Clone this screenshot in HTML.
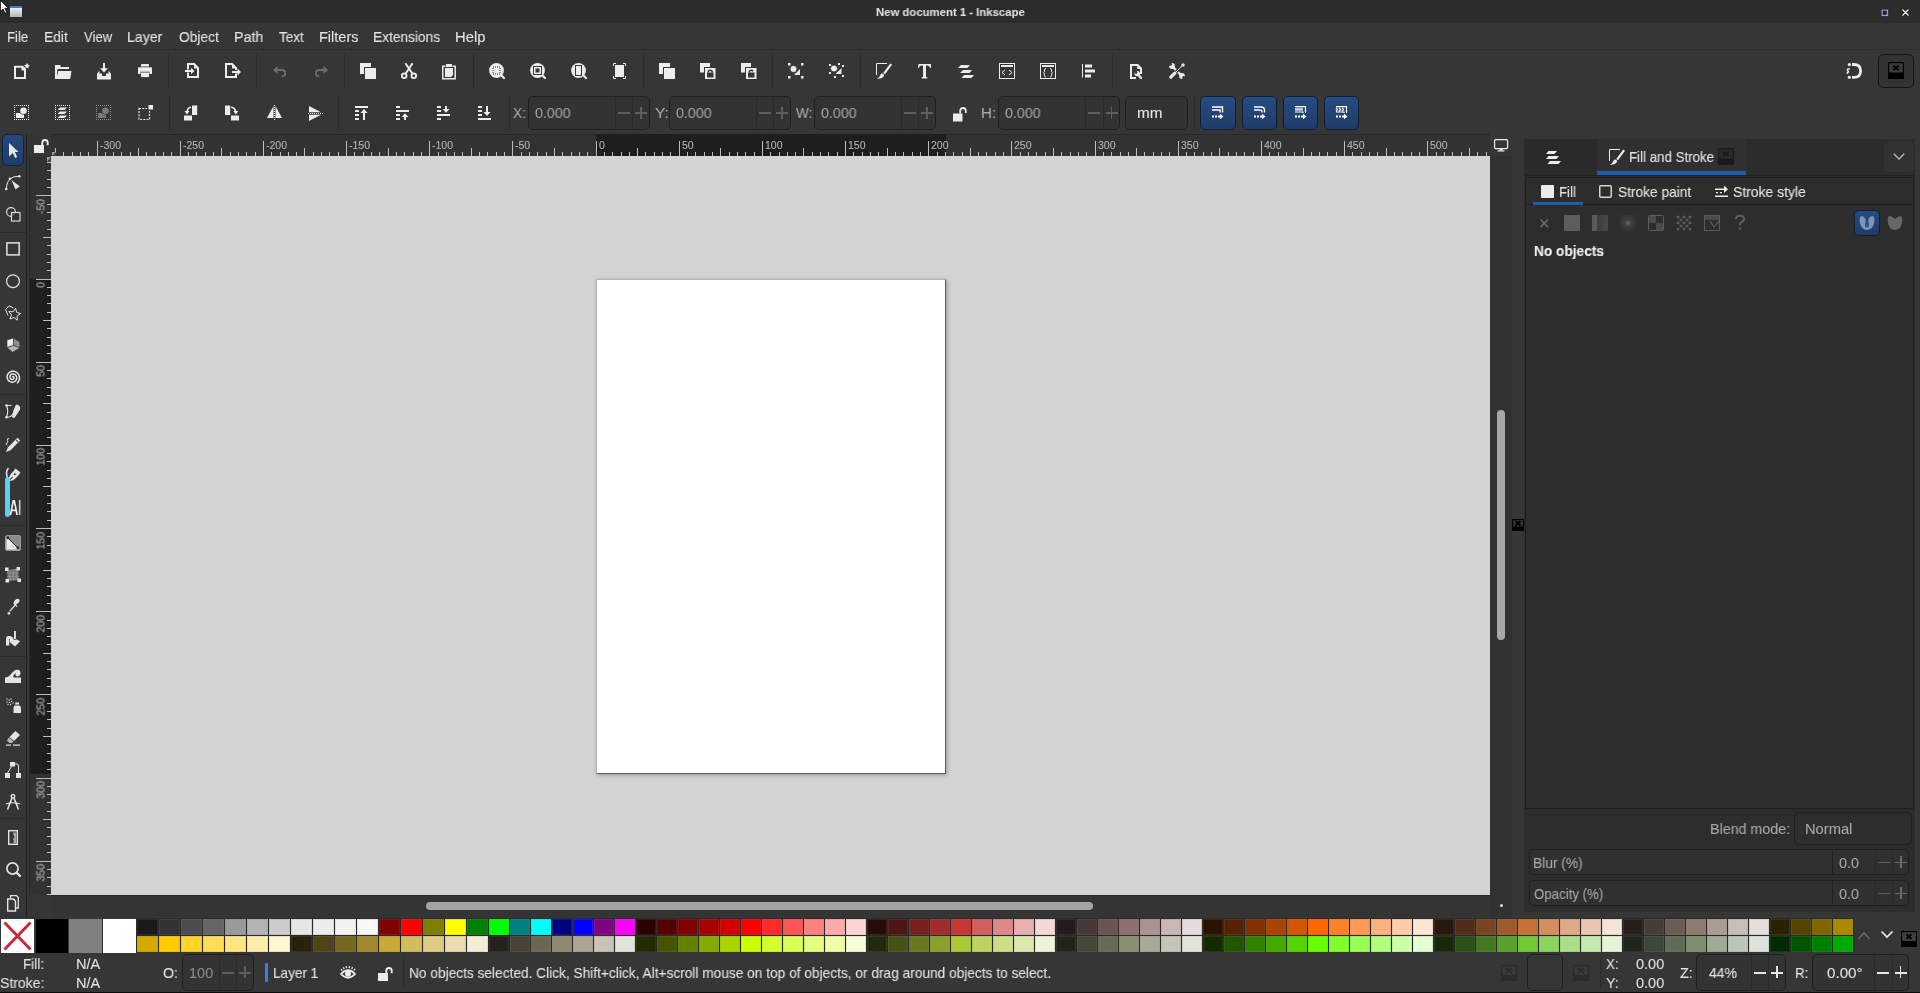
<!DOCTYPE html><html><head><meta charset="utf-8"><style>
*{margin:0;padding:0;box-sizing:border-box}
html,body{width:1920px;height:993px;overflow:hidden;background:#363636;font-family:"Liberation Sans",sans-serif;position:relative}
div,span,svg{position:absolute;display:block}
.t{white-space:nowrap;line-height:1;transform-origin:0 0;will-change:transform;-webkit-text-stroke:0.1px currentColor}
svg{overflow:visible}
</style></head><body><div style="left:0px;top:0px;width:1920px;height:23px;background:#2c2c2c"></div><div style="left:0px;top:23px;width:1920px;height:26px;background:#363636"></div><div style="left:0px;top:49px;width:1920px;height:1px;background:#2f2f2f"></div><div style="left:0px;top:50px;width:1920px;height:84px;background:#363636"></div><div style="left:0px;top:134px;width:27px;height:783px;background:#363636"></div><div style="left:26px;top:134px;width:1px;height:783px;background:#222222"></div><div style="left:27px;top:134px;width:24px;height:22px;background:#353535"></div><div style="left:51px;top:134px;width:1439px;height:22px;background:#323232"></div><div style="left:51px;top:134px;width:1439px;height:1px;background:#282828"></div><div style="left:27px;top:156px;width:24px;height:739px;background:#323232"></div><div style="left:27px;top:156px;width:2px;height:739px;background:#353535"></div><div style="left:29px;top:156px;width:1px;height:739px;background:#2a2a2a"></div><div style="left:51px;top:156px;width:1439px;height:739px;background:#d3d3d3"></div><div style="left:1490px;top:134px;width:22px;height:783px;background:#313131"></div><div style="left:1490px;top:134px;width:22px;height:22px;background:#363636"></div><div style="left:51px;top:895px;width:1439px;height:22px;background:#343434"></div><div style="left:51px;top:895px;width:1439px;height:1px;background:#262626"></div><div style="left:0px;top:917px;width:1920px;height:76px;background:#363636"></div><div style="left:596px;top:134px;width:350px;height:22px;background:#1e1e1e"></div><div style="left:30px;top:279px;width:21px;height:495px;background:#1e1e1e"></div><svg style="left:0;top:0" width="1920" height="993"><line x1="55.5" y1="148" x2="55.5" y2="156" stroke="#bdbdbd" stroke-width="1"/><line x1="63.5" y1="152" x2="63.5" y2="156" stroke="#bdbdbd" stroke-width="1"/><line x1="72.5" y1="152" x2="72.5" y2="156" stroke="#bdbdbd" stroke-width="1"/><line x1="80.5" y1="152" x2="80.5" y2="156" stroke="#bdbdbd" stroke-width="1"/><line x1="88.5" y1="152" x2="88.5" y2="156" stroke="#bdbdbd" stroke-width="1"/><line x1="97.5" y1="141" x2="97.5" y2="156" stroke="#bdbdbd" stroke-width="1"/><line x1="105.5" y1="152" x2="105.5" y2="156" stroke="#bdbdbd" stroke-width="1"/><line x1="113.5" y1="152" x2="113.5" y2="156" stroke="#bdbdbd" stroke-width="1"/><line x1="121.5" y1="152" x2="121.5" y2="156" stroke="#bdbdbd" stroke-width="1"/><line x1="130.5" y1="152" x2="130.5" y2="156" stroke="#bdbdbd" stroke-width="1"/><line x1="138.5" y1="148" x2="138.5" y2="156" stroke="#bdbdbd" stroke-width="1"/><line x1="146.5" y1="152" x2="146.5" y2="156" stroke="#bdbdbd" stroke-width="1"/><line x1="155.5" y1="152" x2="155.5" y2="156" stroke="#bdbdbd" stroke-width="1"/><line x1="163.5" y1="152" x2="163.5" y2="156" stroke="#bdbdbd" stroke-width="1"/><line x1="171.5" y1="152" x2="171.5" y2="156" stroke="#bdbdbd" stroke-width="1"/><line x1="180.5" y1="141" x2="180.5" y2="156" stroke="#bdbdbd" stroke-width="1"/><line x1="188.5" y1="152" x2="188.5" y2="156" stroke="#bdbdbd" stroke-width="1"/><line x1="196.5" y1="152" x2="196.5" y2="156" stroke="#bdbdbd" stroke-width="1"/><line x1="205.5" y1="152" x2="205.5" y2="156" stroke="#bdbdbd" stroke-width="1"/><line x1="213.5" y1="152" x2="213.5" y2="156" stroke="#bdbdbd" stroke-width="1"/><line x1="221.5" y1="148" x2="221.5" y2="156" stroke="#bdbdbd" stroke-width="1"/><line x1="230.5" y1="152" x2="230.5" y2="156" stroke="#bdbdbd" stroke-width="1"/><line x1="238.5" y1="152" x2="238.5" y2="156" stroke="#bdbdbd" stroke-width="1"/><line x1="246.5" y1="152" x2="246.5" y2="156" stroke="#bdbdbd" stroke-width="1"/><line x1="255.5" y1="152" x2="255.5" y2="156" stroke="#bdbdbd" stroke-width="1"/><line x1="263.5" y1="141" x2="263.5" y2="156" stroke="#bdbdbd" stroke-width="1"/><line x1="271.5" y1="152" x2="271.5" y2="156" stroke="#bdbdbd" stroke-width="1"/><line x1="280.5" y1="152" x2="280.5" y2="156" stroke="#bdbdbd" stroke-width="1"/><line x1="288.5" y1="152" x2="288.5" y2="156" stroke="#bdbdbd" stroke-width="1"/><line x1="296.5" y1="152" x2="296.5" y2="156" stroke="#bdbdbd" stroke-width="1"/><line x1="304.5" y1="148" x2="304.5" y2="156" stroke="#bdbdbd" stroke-width="1"/><line x1="313.5" y1="152" x2="313.5" y2="156" stroke="#bdbdbd" stroke-width="1"/><line x1="321.5" y1="152" x2="321.5" y2="156" stroke="#bdbdbd" stroke-width="1"/><line x1="329.5" y1="152" x2="329.5" y2="156" stroke="#bdbdbd" stroke-width="1"/><line x1="338.5" y1="152" x2="338.5" y2="156" stroke="#bdbdbd" stroke-width="1"/><line x1="346.5" y1="141" x2="346.5" y2="156" stroke="#bdbdbd" stroke-width="1"/><line x1="354.5" y1="152" x2="354.5" y2="156" stroke="#bdbdbd" stroke-width="1"/><line x1="363.5" y1="152" x2="363.5" y2="156" stroke="#bdbdbd" stroke-width="1"/><line x1="371.5" y1="152" x2="371.5" y2="156" stroke="#bdbdbd" stroke-width="1"/><line x1="379.5" y1="152" x2="379.5" y2="156" stroke="#bdbdbd" stroke-width="1"/><line x1="388.5" y1="148" x2="388.5" y2="156" stroke="#bdbdbd" stroke-width="1"/><line x1="396.5" y1="152" x2="396.5" y2="156" stroke="#bdbdbd" stroke-width="1"/><line x1="404.5" y1="152" x2="404.5" y2="156" stroke="#bdbdbd" stroke-width="1"/><line x1="413.5" y1="152" x2="413.5" y2="156" stroke="#bdbdbd" stroke-width="1"/><line x1="421.5" y1="152" x2="421.5" y2="156" stroke="#bdbdbd" stroke-width="1"/><line x1="429.5" y1="141" x2="429.5" y2="156" stroke="#bdbdbd" stroke-width="1"/><line x1="438.5" y1="152" x2="438.5" y2="156" stroke="#bdbdbd" stroke-width="1"/><line x1="446.5" y1="152" x2="446.5" y2="156" stroke="#bdbdbd" stroke-width="1"/><line x1="454.5" y1="152" x2="454.5" y2="156" stroke="#bdbdbd" stroke-width="1"/><line x1="462.5" y1="152" x2="462.5" y2="156" stroke="#bdbdbd" stroke-width="1"/><line x1="471.5" y1="148" x2="471.5" y2="156" stroke="#bdbdbd" stroke-width="1"/><line x1="479.5" y1="152" x2="479.5" y2="156" stroke="#bdbdbd" stroke-width="1"/><line x1="487.5" y1="152" x2="487.5" y2="156" stroke="#bdbdbd" stroke-width="1"/><line x1="496.5" y1="152" x2="496.5" y2="156" stroke="#bdbdbd" stroke-width="1"/><line x1="504.5" y1="152" x2="504.5" y2="156" stroke="#bdbdbd" stroke-width="1"/><line x1="512.5" y1="141" x2="512.5" y2="156" stroke="#bdbdbd" stroke-width="1"/><line x1="521.5" y1="152" x2="521.5" y2="156" stroke="#bdbdbd" stroke-width="1"/><line x1="529.5" y1="152" x2="529.5" y2="156" stroke="#bdbdbd" stroke-width="1"/><line x1="537.5" y1="152" x2="537.5" y2="156" stroke="#bdbdbd" stroke-width="1"/><line x1="546.5" y1="152" x2="546.5" y2="156" stroke="#bdbdbd" stroke-width="1"/><line x1="554.5" y1="148" x2="554.5" y2="156" stroke="#bdbdbd" stroke-width="1"/><line x1="562.5" y1="152" x2="562.5" y2="156" stroke="#bdbdbd" stroke-width="1"/><line x1="571.5" y1="152" x2="571.5" y2="156" stroke="#bdbdbd" stroke-width="1"/><line x1="579.5" y1="152" x2="579.5" y2="156" stroke="#bdbdbd" stroke-width="1"/><line x1="587.5" y1="152" x2="587.5" y2="156" stroke="#bdbdbd" stroke-width="1"/><line x1="596.5" y1="141" x2="596.5" y2="156" stroke="#bdbdbd" stroke-width="1"/><line x1="604.5" y1="152" x2="604.5" y2="156" stroke="#bdbdbd" stroke-width="1"/><line x1="612.5" y1="152" x2="612.5" y2="156" stroke="#bdbdbd" stroke-width="1"/><line x1="621.5" y1="152" x2="621.5" y2="156" stroke="#bdbdbd" stroke-width="1"/><line x1="629.5" y1="152" x2="629.5" y2="156" stroke="#bdbdbd" stroke-width="1"/><line x1="637.5" y1="148" x2="637.5" y2="156" stroke="#bdbdbd" stroke-width="1"/><line x1="645.5" y1="152" x2="645.5" y2="156" stroke="#bdbdbd" stroke-width="1"/><line x1="654.5" y1="152" x2="654.5" y2="156" stroke="#bdbdbd" stroke-width="1"/><line x1="662.5" y1="152" x2="662.5" y2="156" stroke="#bdbdbd" stroke-width="1"/><line x1="670.5" y1="152" x2="670.5" y2="156" stroke="#bdbdbd" stroke-width="1"/><line x1="679.5" y1="141" x2="679.5" y2="156" stroke="#bdbdbd" stroke-width="1"/><line x1="687.5" y1="152" x2="687.5" y2="156" stroke="#bdbdbd" stroke-width="1"/><line x1="695.5" y1="152" x2="695.5" y2="156" stroke="#bdbdbd" stroke-width="1"/><line x1="704.5" y1="152" x2="704.5" y2="156" stroke="#bdbdbd" stroke-width="1"/><line x1="712.5" y1="152" x2="712.5" y2="156" stroke="#bdbdbd" stroke-width="1"/><line x1="720.5" y1="148" x2="720.5" y2="156" stroke="#bdbdbd" stroke-width="1"/><line x1="729.5" y1="152" x2="729.5" y2="156" stroke="#bdbdbd" stroke-width="1"/><line x1="737.5" y1="152" x2="737.5" y2="156" stroke="#bdbdbd" stroke-width="1"/><line x1="745.5" y1="152" x2="745.5" y2="156" stroke="#bdbdbd" stroke-width="1"/><line x1="754.5" y1="152" x2="754.5" y2="156" stroke="#bdbdbd" stroke-width="1"/><line x1="762.5" y1="141" x2="762.5" y2="156" stroke="#bdbdbd" stroke-width="1"/><line x1="770.5" y1="152" x2="770.5" y2="156" stroke="#bdbdbd" stroke-width="1"/><line x1="779.5" y1="152" x2="779.5" y2="156" stroke="#bdbdbd" stroke-width="1"/><line x1="787.5" y1="152" x2="787.5" y2="156" stroke="#bdbdbd" stroke-width="1"/><line x1="795.5" y1="152" x2="795.5" y2="156" stroke="#bdbdbd" stroke-width="1"/><line x1="803.5" y1="148" x2="803.5" y2="156" stroke="#bdbdbd" stroke-width="1"/><line x1="812.5" y1="152" x2="812.5" y2="156" stroke="#bdbdbd" stroke-width="1"/><line x1="820.5" y1="152" x2="820.5" y2="156" stroke="#bdbdbd" stroke-width="1"/><line x1="828.5" y1="152" x2="828.5" y2="156" stroke="#bdbdbd" stroke-width="1"/><line x1="837.5" y1="152" x2="837.5" y2="156" stroke="#bdbdbd" stroke-width="1"/><line x1="845.5" y1="141" x2="845.5" y2="156" stroke="#bdbdbd" stroke-width="1"/><line x1="853.5" y1="152" x2="853.5" y2="156" stroke="#bdbdbd" stroke-width="1"/><line x1="862.5" y1="152" x2="862.5" y2="156" stroke="#bdbdbd" stroke-width="1"/><line x1="870.5" y1="152" x2="870.5" y2="156" stroke="#bdbdbd" stroke-width="1"/><line x1="878.5" y1="152" x2="878.5" y2="156" stroke="#bdbdbd" stroke-width="1"/><line x1="887.5" y1="148" x2="887.5" y2="156" stroke="#bdbdbd" stroke-width="1"/><line x1="895.5" y1="152" x2="895.5" y2="156" stroke="#bdbdbd" stroke-width="1"/><line x1="903.5" y1="152" x2="903.5" y2="156" stroke="#bdbdbd" stroke-width="1"/><line x1="912.5" y1="152" x2="912.5" y2="156" stroke="#bdbdbd" stroke-width="1"/><line x1="920.5" y1="152" x2="920.5" y2="156" stroke="#bdbdbd" stroke-width="1"/><line x1="928.5" y1="141" x2="928.5" y2="156" stroke="#bdbdbd" stroke-width="1"/><line x1="937.5" y1="152" x2="937.5" y2="156" stroke="#bdbdbd" stroke-width="1"/><line x1="945.5" y1="152" x2="945.5" y2="156" stroke="#bdbdbd" stroke-width="1"/><line x1="953.5" y1="152" x2="953.5" y2="156" stroke="#bdbdbd" stroke-width="1"/><line x1="962.5" y1="152" x2="962.5" y2="156" stroke="#bdbdbd" stroke-width="1"/><line x1="970.5" y1="148" x2="970.5" y2="156" stroke="#bdbdbd" stroke-width="1"/><line x1="978.5" y1="152" x2="978.5" y2="156" stroke="#bdbdbd" stroke-width="1"/><line x1="986.5" y1="152" x2="986.5" y2="156" stroke="#bdbdbd" stroke-width="1"/><line x1="995.5" y1="152" x2="995.5" y2="156" stroke="#bdbdbd" stroke-width="1"/><line x1="1003.5" y1="152" x2="1003.5" y2="156" stroke="#bdbdbd" stroke-width="1"/><line x1="1011.5" y1="141" x2="1011.5" y2="156" stroke="#bdbdbd" stroke-width="1"/><line x1="1020.5" y1="152" x2="1020.5" y2="156" stroke="#bdbdbd" stroke-width="1"/><line x1="1028.5" y1="152" x2="1028.5" y2="156" stroke="#bdbdbd" stroke-width="1"/><line x1="1036.5" y1="152" x2="1036.5" y2="156" stroke="#bdbdbd" stroke-width="1"/><line x1="1045.5" y1="152" x2="1045.5" y2="156" stroke="#bdbdbd" stroke-width="1"/><line x1="1053.5" y1="148" x2="1053.5" y2="156" stroke="#bdbdbd" stroke-width="1"/><line x1="1061.5" y1="152" x2="1061.5" y2="156" stroke="#bdbdbd" stroke-width="1"/><line x1="1070.5" y1="152" x2="1070.5" y2="156" stroke="#bdbdbd" stroke-width="1"/><line x1="1078.5" y1="152" x2="1078.5" y2="156" stroke="#bdbdbd" stroke-width="1"/><line x1="1086.5" y1="152" x2="1086.5" y2="156" stroke="#bdbdbd" stroke-width="1"/><line x1="1095.5" y1="141" x2="1095.5" y2="156" stroke="#bdbdbd" stroke-width="1"/><line x1="1103.5" y1="152" x2="1103.5" y2="156" stroke="#bdbdbd" stroke-width="1"/><line x1="1111.5" y1="152" x2="1111.5" y2="156" stroke="#bdbdbd" stroke-width="1"/><line x1="1120.5" y1="152" x2="1120.5" y2="156" stroke="#bdbdbd" stroke-width="1"/><line x1="1128.5" y1="152" x2="1128.5" y2="156" stroke="#bdbdbd" stroke-width="1"/><line x1="1136.5" y1="148" x2="1136.5" y2="156" stroke="#bdbdbd" stroke-width="1"/><line x1="1144.5" y1="152" x2="1144.5" y2="156" stroke="#bdbdbd" stroke-width="1"/><line x1="1153.5" y1="152" x2="1153.5" y2="156" stroke="#bdbdbd" stroke-width="1"/><line x1="1161.5" y1="152" x2="1161.5" y2="156" stroke="#bdbdbd" stroke-width="1"/><line x1="1169.5" y1="152" x2="1169.5" y2="156" stroke="#bdbdbd" stroke-width="1"/><line x1="1178.5" y1="141" x2="1178.5" y2="156" stroke="#bdbdbd" stroke-width="1"/><line x1="1186.5" y1="152" x2="1186.5" y2="156" stroke="#bdbdbd" stroke-width="1"/><line x1="1194.5" y1="152" x2="1194.5" y2="156" stroke="#bdbdbd" stroke-width="1"/><line x1="1203.5" y1="152" x2="1203.5" y2="156" stroke="#bdbdbd" stroke-width="1"/><line x1="1211.5" y1="152" x2="1211.5" y2="156" stroke="#bdbdbd" stroke-width="1"/><line x1="1219.5" y1="148" x2="1219.5" y2="156" stroke="#bdbdbd" stroke-width="1"/><line x1="1228.5" y1="152" x2="1228.5" y2="156" stroke="#bdbdbd" stroke-width="1"/><line x1="1236.5" y1="152" x2="1236.5" y2="156" stroke="#bdbdbd" stroke-width="1"/><line x1="1244.5" y1="152" x2="1244.5" y2="156" stroke="#bdbdbd" stroke-width="1"/><line x1="1253.5" y1="152" x2="1253.5" y2="156" stroke="#bdbdbd" stroke-width="1"/><line x1="1261.5" y1="141" x2="1261.5" y2="156" stroke="#bdbdbd" stroke-width="1"/><line x1="1269.5" y1="152" x2="1269.5" y2="156" stroke="#bdbdbd" stroke-width="1"/><line x1="1278.5" y1="152" x2="1278.5" y2="156" stroke="#bdbdbd" stroke-width="1"/><line x1="1286.5" y1="152" x2="1286.5" y2="156" stroke="#bdbdbd" stroke-width="1"/><line x1="1294.5" y1="152" x2="1294.5" y2="156" stroke="#bdbdbd" stroke-width="1"/><line x1="1303.5" y1="148" x2="1303.5" y2="156" stroke="#bdbdbd" stroke-width="1"/><line x1="1311.5" y1="152" x2="1311.5" y2="156" stroke="#bdbdbd" stroke-width="1"/><line x1="1319.5" y1="152" x2="1319.5" y2="156" stroke="#bdbdbd" stroke-width="1"/><line x1="1327.5" y1="152" x2="1327.5" y2="156" stroke="#bdbdbd" stroke-width="1"/><line x1="1336.5" y1="152" x2="1336.5" y2="156" stroke="#bdbdbd" stroke-width="1"/><line x1="1344.5" y1="141" x2="1344.5" y2="156" stroke="#bdbdbd" stroke-width="1"/><line x1="1352.5" y1="152" x2="1352.5" y2="156" stroke="#bdbdbd" stroke-width="1"/><line x1="1361.5" y1="152" x2="1361.5" y2="156" stroke="#bdbdbd" stroke-width="1"/><line x1="1369.5" y1="152" x2="1369.5" y2="156" stroke="#bdbdbd" stroke-width="1"/><line x1="1377.5" y1="152" x2="1377.5" y2="156" stroke="#bdbdbd" stroke-width="1"/><line x1="1386.5" y1="148" x2="1386.5" y2="156" stroke="#bdbdbd" stroke-width="1"/><line x1="1394.5" y1="152" x2="1394.5" y2="156" stroke="#bdbdbd" stroke-width="1"/><line x1="1402.5" y1="152" x2="1402.5" y2="156" stroke="#bdbdbd" stroke-width="1"/><line x1="1411.5" y1="152" x2="1411.5" y2="156" stroke="#bdbdbd" stroke-width="1"/><line x1="1419.5" y1="152" x2="1419.5" y2="156" stroke="#bdbdbd" stroke-width="1"/><line x1="1427.5" y1="141" x2="1427.5" y2="156" stroke="#bdbdbd" stroke-width="1"/><line x1="1436.5" y1="152" x2="1436.5" y2="156" stroke="#bdbdbd" stroke-width="1"/><line x1="1444.5" y1="152" x2="1444.5" y2="156" stroke="#bdbdbd" stroke-width="1"/><line x1="1452.5" y1="152" x2="1452.5" y2="156" stroke="#bdbdbd" stroke-width="1"/><line x1="1461.5" y1="152" x2="1461.5" y2="156" stroke="#bdbdbd" stroke-width="1"/><line x1="1469.5" y1="148" x2="1469.5" y2="156" stroke="#bdbdbd" stroke-width="1"/><line x1="1477.5" y1="152" x2="1477.5" y2="156" stroke="#bdbdbd" stroke-width="1"/><line x1="1486.5" y1="152" x2="1486.5" y2="156" stroke="#bdbdbd" stroke-width="1"/><line x1="47" y1="162.5" x2="51" y2="162.5" stroke="#bdbdbd" stroke-width="1"/><line x1="47" y1="170.5" x2="51" y2="170.5" stroke="#bdbdbd" stroke-width="1"/><line x1="47" y1="179.5" x2="51" y2="179.5" stroke="#bdbdbd" stroke-width="1"/><line x1="47" y1="187.5" x2="51" y2="187.5" stroke="#bdbdbd" stroke-width="1"/><line x1="36" y1="195.5" x2="51" y2="195.5" stroke="#bdbdbd" stroke-width="1"/><line x1="47" y1="204.5" x2="51" y2="204.5" stroke="#bdbdbd" stroke-width="1"/><line x1="47" y1="212.5" x2="51" y2="212.5" stroke="#bdbdbd" stroke-width="1"/><line x1="47" y1="220.5" x2="51" y2="220.5" stroke="#bdbdbd" stroke-width="1"/><line x1="47" y1="229.5" x2="51" y2="229.5" stroke="#bdbdbd" stroke-width="1"/><line x1="43" y1="237.5" x2="51" y2="237.5" stroke="#bdbdbd" stroke-width="1"/><line x1="47" y1="245.5" x2="51" y2="245.5" stroke="#bdbdbd" stroke-width="1"/><line x1="47" y1="254.5" x2="51" y2="254.5" stroke="#bdbdbd" stroke-width="1"/><line x1="47" y1="262.5" x2="51" y2="262.5" stroke="#bdbdbd" stroke-width="1"/><line x1="47" y1="270.5" x2="51" y2="270.5" stroke="#bdbdbd" stroke-width="1"/><line x1="36" y1="279.5" x2="51" y2="279.5" stroke="#bdbdbd" stroke-width="1"/><line x1="47" y1="287.5" x2="51" y2="287.5" stroke="#bdbdbd" stroke-width="1"/><line x1="47" y1="295.5" x2="51" y2="295.5" stroke="#bdbdbd" stroke-width="1"/><line x1="47" y1="303.5" x2="51" y2="303.5" stroke="#bdbdbd" stroke-width="1"/><line x1="47" y1="312.5" x2="51" y2="312.5" stroke="#bdbdbd" stroke-width="1"/><line x1="43" y1="320.5" x2="51" y2="320.5" stroke="#bdbdbd" stroke-width="1"/><line x1="47" y1="328.5" x2="51" y2="328.5" stroke="#bdbdbd" stroke-width="1"/><line x1="47" y1="337.5" x2="51" y2="337.5" stroke="#bdbdbd" stroke-width="1"/><line x1="47" y1="345.5" x2="51" y2="345.5" stroke="#bdbdbd" stroke-width="1"/><line x1="47" y1="353.5" x2="51" y2="353.5" stroke="#bdbdbd" stroke-width="1"/><line x1="36" y1="362.5" x2="51" y2="362.5" stroke="#bdbdbd" stroke-width="1"/><line x1="47" y1="370.5" x2="51" y2="370.5" stroke="#bdbdbd" stroke-width="1"/><line x1="47" y1="378.5" x2="51" y2="378.5" stroke="#bdbdbd" stroke-width="1"/><line x1="47" y1="387.5" x2="51" y2="387.5" stroke="#bdbdbd" stroke-width="1"/><line x1="47" y1="395.5" x2="51" y2="395.5" stroke="#bdbdbd" stroke-width="1"/><line x1="43" y1="403.5" x2="51" y2="403.5" stroke="#bdbdbd" stroke-width="1"/><line x1="47" y1="412.5" x2="51" y2="412.5" stroke="#bdbdbd" stroke-width="1"/><line x1="47" y1="420.5" x2="51" y2="420.5" stroke="#bdbdbd" stroke-width="1"/><line x1="47" y1="428.5" x2="51" y2="428.5" stroke="#bdbdbd" stroke-width="1"/><line x1="47" y1="437.5" x2="51" y2="437.5" stroke="#bdbdbd" stroke-width="1"/><line x1="36" y1="445.5" x2="51" y2="445.5" stroke="#bdbdbd" stroke-width="1"/><line x1="47" y1="453.5" x2="51" y2="453.5" stroke="#bdbdbd" stroke-width="1"/><line x1="47" y1="461.5" x2="51" y2="461.5" stroke="#bdbdbd" stroke-width="1"/><line x1="47" y1="470.5" x2="51" y2="470.5" stroke="#bdbdbd" stroke-width="1"/><line x1="47" y1="478.5" x2="51" y2="478.5" stroke="#bdbdbd" stroke-width="1"/><line x1="43" y1="486.5" x2="51" y2="486.5" stroke="#bdbdbd" stroke-width="1"/><line x1="47" y1="495.5" x2="51" y2="495.5" stroke="#bdbdbd" stroke-width="1"/><line x1="47" y1="503.5" x2="51" y2="503.5" stroke="#bdbdbd" stroke-width="1"/><line x1="47" y1="511.5" x2="51" y2="511.5" stroke="#bdbdbd" stroke-width="1"/><line x1="47" y1="520.5" x2="51" y2="520.5" stroke="#bdbdbd" stroke-width="1"/><line x1="36" y1="528.5" x2="51" y2="528.5" stroke="#bdbdbd" stroke-width="1"/><line x1="47" y1="536.5" x2="51" y2="536.5" stroke="#bdbdbd" stroke-width="1"/><line x1="47" y1="545.5" x2="51" y2="545.5" stroke="#bdbdbd" stroke-width="1"/><line x1="47" y1="553.5" x2="51" y2="553.5" stroke="#bdbdbd" stroke-width="1"/><line x1="47" y1="561.5" x2="51" y2="561.5" stroke="#bdbdbd" stroke-width="1"/><line x1="43" y1="570.5" x2="51" y2="570.5" stroke="#bdbdbd" stroke-width="1"/><line x1="47" y1="578.5" x2="51" y2="578.5" stroke="#bdbdbd" stroke-width="1"/><line x1="47" y1="586.5" x2="51" y2="586.5" stroke="#bdbdbd" stroke-width="1"/><line x1="47" y1="595.5" x2="51" y2="595.5" stroke="#bdbdbd" stroke-width="1"/><line x1="47" y1="603.5" x2="51" y2="603.5" stroke="#bdbdbd" stroke-width="1"/><line x1="36" y1="611.5" x2="51" y2="611.5" stroke="#bdbdbd" stroke-width="1"/><line x1="47" y1="620.5" x2="51" y2="620.5" stroke="#bdbdbd" stroke-width="1"/><line x1="47" y1="628.5" x2="51" y2="628.5" stroke="#bdbdbd" stroke-width="1"/><line x1="47" y1="636.5" x2="51" y2="636.5" stroke="#bdbdbd" stroke-width="1"/><line x1="47" y1="644.5" x2="51" y2="644.5" stroke="#bdbdbd" stroke-width="1"/><line x1="43" y1="653.5" x2="51" y2="653.5" stroke="#bdbdbd" stroke-width="1"/><line x1="47" y1="661.5" x2="51" y2="661.5" stroke="#bdbdbd" stroke-width="1"/><line x1="47" y1="669.5" x2="51" y2="669.5" stroke="#bdbdbd" stroke-width="1"/><line x1="47" y1="678.5" x2="51" y2="678.5" stroke="#bdbdbd" stroke-width="1"/><line x1="47" y1="686.5" x2="51" y2="686.5" stroke="#bdbdbd" stroke-width="1"/><line x1="36" y1="694.5" x2="51" y2="694.5" stroke="#bdbdbd" stroke-width="1"/><line x1="47" y1="703.5" x2="51" y2="703.5" stroke="#bdbdbd" stroke-width="1"/><line x1="47" y1="711.5" x2="51" y2="711.5" stroke="#bdbdbd" stroke-width="1"/><line x1="47" y1="719.5" x2="51" y2="719.5" stroke="#bdbdbd" stroke-width="1"/><line x1="47" y1="728.5" x2="51" y2="728.5" stroke="#bdbdbd" stroke-width="1"/><line x1="43" y1="736.5" x2="51" y2="736.5" stroke="#bdbdbd" stroke-width="1"/><line x1="47" y1="744.5" x2="51" y2="744.5" stroke="#bdbdbd" stroke-width="1"/><line x1="47" y1="753.5" x2="51" y2="753.5" stroke="#bdbdbd" stroke-width="1"/><line x1="47" y1="761.5" x2="51" y2="761.5" stroke="#bdbdbd" stroke-width="1"/><line x1="47" y1="769.5" x2="51" y2="769.5" stroke="#bdbdbd" stroke-width="1"/><line x1="36" y1="778.5" x2="51" y2="778.5" stroke="#bdbdbd" stroke-width="1"/><line x1="47" y1="786.5" x2="51" y2="786.5" stroke="#bdbdbd" stroke-width="1"/><line x1="47" y1="794.5" x2="51" y2="794.5" stroke="#bdbdbd" stroke-width="1"/><line x1="47" y1="802.5" x2="51" y2="802.5" stroke="#bdbdbd" stroke-width="1"/><line x1="47" y1="811.5" x2="51" y2="811.5" stroke="#bdbdbd" stroke-width="1"/><line x1="43" y1="819.5" x2="51" y2="819.5" stroke="#bdbdbd" stroke-width="1"/><line x1="47" y1="827.5" x2="51" y2="827.5" stroke="#bdbdbd" stroke-width="1"/><line x1="47" y1="836.5" x2="51" y2="836.5" stroke="#bdbdbd" stroke-width="1"/><line x1="47" y1="844.5" x2="51" y2="844.5" stroke="#bdbdbd" stroke-width="1"/><line x1="47" y1="852.5" x2="51" y2="852.5" stroke="#bdbdbd" stroke-width="1"/><line x1="36" y1="861.5" x2="51" y2="861.5" stroke="#bdbdbd" stroke-width="1"/><line x1="47" y1="869.5" x2="51" y2="869.5" stroke="#bdbdbd" stroke-width="1"/><line x1="47" y1="877.5" x2="51" y2="877.5" stroke="#bdbdbd" stroke-width="1"/><line x1="47" y1="886.5" x2="51" y2="886.5" stroke="#bdbdbd" stroke-width="1"/><line x1="47" y1="894.5" x2="51" y2="894.5" stroke="#bdbdbd" stroke-width="1"/></svg><span class="t" style="left:99.5px;top:140px;font-size:10.5px;color:#b4b4b4">-300</span><span class="t" style="left:182.5px;top:140px;font-size:10.5px;color:#b4b4b4">-250</span><span class="t" style="left:265.5px;top:140px;font-size:10.5px;color:#b4b4b4">-200</span><span class="t" style="left:348.5px;top:140px;font-size:10.5px;color:#b4b4b4">-150</span><span class="t" style="left:431.5px;top:140px;font-size:10.5px;color:#b4b4b4">-100</span><span class="t" style="left:514.5px;top:140px;font-size:10.5px;color:#b4b4b4">-50</span><span class="t" style="left:598.5px;top:140px;font-size:10.5px;color:#b4b4b4">0</span><span class="t" style="left:681.5px;top:140px;font-size:10.5px;color:#b4b4b4">50</span><span class="t" style="left:764.5px;top:140px;font-size:10.5px;color:#b4b4b4">100</span><span class="t" style="left:847.5px;top:140px;font-size:10.5px;color:#b4b4b4">150</span><span class="t" style="left:930.5px;top:140px;font-size:10.5px;color:#b4b4b4">200</span><span class="t" style="left:1013.5px;top:140px;font-size:10.5px;color:#b4b4b4">250</span><span class="t" style="left:1097.5px;top:140px;font-size:10.5px;color:#b4b4b4">300</span><span class="t" style="left:1180.5px;top:140px;font-size:10.5px;color:#b4b4b4">350</span><span class="t" style="left:1263.5px;top:140px;font-size:10.5px;color:#b4b4b4">400</span><span class="t" style="left:1346.5px;top:140px;font-size:10.5px;color:#b4b4b4">450</span><span class="t" style="left:1429.5px;top:140px;font-size:10.5px;color:#b4b4b4">500</span><span class="t" style="left:36px;top:198.8px;font-size:10.5px;color:#b4b4b4;writing-mode:vertical-rl;transform:rotate(180deg);transform-origin:50% 50%">-50</span><span class="t" style="left:36px;top:282.0px;font-size:10.5px;color:#b4b4b4;writing-mode:vertical-rl;transform:rotate(180deg);transform-origin:50% 50%">0</span><span class="t" style="left:36px;top:365.2px;font-size:10.5px;color:#b4b4b4;writing-mode:vertical-rl;transform:rotate(180deg);transform-origin:50% 50%">50</span><span class="t" style="left:36px;top:448.4px;font-size:10.5px;color:#b4b4b4;writing-mode:vertical-rl;transform:rotate(180deg);transform-origin:50% 50%">100</span><span class="t" style="left:36px;top:531.5px;font-size:10.5px;color:#b4b4b4;writing-mode:vertical-rl;transform:rotate(180deg);transform-origin:50% 50%">150</span><span class="t" style="left:36px;top:614.7px;font-size:10.5px;color:#b4b4b4;writing-mode:vertical-rl;transform:rotate(180deg);transform-origin:50% 50%">200</span><span class="t" style="left:36px;top:697.9px;font-size:10.5px;color:#b4b4b4;writing-mode:vertical-rl;transform:rotate(180deg);transform-origin:50% 50%">250</span><span class="t" style="left:36px;top:781.0px;font-size:10.5px;color:#b4b4b4;writing-mode:vertical-rl;transform:rotate(180deg);transform-origin:50% 50%">300</span><span class="t" style="left:36px;top:864.2px;font-size:10.5px;color:#b4b4b4;writing-mode:vertical-rl;transform:rotate(180deg);transform-origin:50% 50%">350</span><div style="left:596px;top:279px;width:350px;height:495px;background:#ffffff;border:1px solid;border-color:#b4b4b4 #5e5e5e #5e5e5e #b4b4b4;box-shadow:1px 1px 4px rgba(0,0,0,0.3)"></div><div style="left:1497px;top:410px;width:8px;height:230px;background:#a8a8a8;border-radius:4px"></div><div style="left:426px;top:902px;width:667px;height:8px;background:#a4a4a4;border-radius:4px"></div><div style="left:136px;top:918px;width:1718px;height:34px;background:#2a2a2a"></div><div style="left:137px;top:919px;width:21px;height:16px;background:#1a1a1a;box-shadow:inset 0 0 0 1px rgba(128,128,128,.18)"></div><div style="left:137px;top:936px;width:21px;height:16px;background:#d4aa00;box-shadow:inset 0 0 0 1px rgba(128,128,128,.18)"></div><div style="left:159px;top:919px;width:21px;height:16px;background:#333333;box-shadow:inset 0 0 0 1px rgba(128,128,128,.18)"></div><div style="left:159px;top:936px;width:21px;height:16px;background:#ffcc00;box-shadow:inset 0 0 0 1px rgba(128,128,128,.18)"></div><div style="left:181px;top:919px;width:21px;height:16px;background:#4d4d4d;box-shadow:inset 0 0 0 1px rgba(128,128,128,.18)"></div><div style="left:181px;top:936px;width:21px;height:16px;background:#ffd42b;box-shadow:inset 0 0 0 1px rgba(128,128,128,.18)"></div><div style="left:203px;top:919px;width:21px;height:16px;background:#666666;box-shadow:inset 0 0 0 1px rgba(128,128,128,.18)"></div><div style="left:203px;top:936px;width:21px;height:16px;background:#ffdd55;box-shadow:inset 0 0 0 1px rgba(128,128,128,.18)"></div><div style="left:225px;top:919px;width:21px;height:16px;background:#999999;box-shadow:inset 0 0 0 1px rgba(128,128,128,.18)"></div><div style="left:225px;top:936px;width:21px;height:16px;background:#ffe680;box-shadow:inset 0 0 0 1px rgba(128,128,128,.18)"></div><div style="left:247px;top:919px;width:21px;height:16px;background:#b3b3b3;box-shadow:inset 0 0 0 1px rgba(128,128,128,.18)"></div><div style="left:247px;top:936px;width:21px;height:16px;background:#ffeeaa;box-shadow:inset 0 0 0 1px rgba(128,128,128,.18)"></div><div style="left:269px;top:919px;width:21px;height:16px;background:#cccccc;box-shadow:inset 0 0 0 1px rgba(128,128,128,.18)"></div><div style="left:269px;top:936px;width:21px;height:16px;background:#fff6d4;box-shadow:inset 0 0 0 1px rgba(128,128,128,.18)"></div><div style="left:291px;top:919px;width:21px;height:16px;background:#e6e6e6;box-shadow:inset 0 0 0 1px rgba(128,128,128,.18)"></div><div style="left:291px;top:936px;width:21px;height:16px;background:#28220b;box-shadow:inset 0 0 0 1px rgba(128,128,128,.18)"></div><div style="left:313px;top:919px;width:21px;height:16px;background:#ececec;box-shadow:inset 0 0 0 1px rgba(128,128,128,.18)"></div><div style="left:313px;top:936px;width:21px;height:16px;background:#504416;box-shadow:inset 0 0 0 1px rgba(128,128,128,.18)"></div><div style="left:335px;top:919px;width:21px;height:16px;background:#f2f2f2;box-shadow:inset 0 0 0 1px rgba(128,128,128,.18)"></div><div style="left:335px;top:936px;width:21px;height:16px;background:#786721;box-shadow:inset 0 0 0 1px rgba(128,128,128,.18)"></div><div style="left:357px;top:919px;width:21px;height:16px;background:#f8f8f8;box-shadow:inset 0 0 0 1px rgba(128,128,128,.18)"></div><div style="left:357px;top:936px;width:21px;height:16px;background:#a0892c;box-shadow:inset 0 0 0 1px rgba(128,128,128,.18)"></div><div style="left:379px;top:919px;width:21px;height:16px;background:#800000;box-shadow:inset 0 0 0 1px rgba(128,128,128,.18)"></div><div style="left:379px;top:936px;width:21px;height:16px;background:#c8ab37;box-shadow:inset 0 0 0 1px rgba(128,128,128,.18)"></div><div style="left:401px;top:919px;width:21px;height:16px;background:#ff0000;box-shadow:inset 0 0 0 1px rgba(128,128,128,.18)"></div><div style="left:401px;top:936px;width:21px;height:16px;background:#d3bc5f;box-shadow:inset 0 0 0 1px rgba(128,128,128,.18)"></div><div style="left:423px;top:919px;width:21px;height:16px;background:#808000;box-shadow:inset 0 0 0 1px rgba(128,128,128,.18)"></div><div style="left:423px;top:936px;width:21px;height:16px;background:#decd87;box-shadow:inset 0 0 0 1px rgba(128,128,128,.18)"></div><div style="left:445px;top:919px;width:21px;height:16px;background:#ffff00;box-shadow:inset 0 0 0 1px rgba(128,128,128,.18)"></div><div style="left:445px;top:936px;width:21px;height:16px;background:#e9ddaf;box-shadow:inset 0 0 0 1px rgba(128,128,128,.18)"></div><div style="left:467px;top:919px;width:21px;height:16px;background:#008000;box-shadow:inset 0 0 0 1px rgba(128,128,128,.18)"></div><div style="left:467px;top:936px;width:21px;height:16px;background:#f4eed7;box-shadow:inset 0 0 0 1px rgba(128,128,128,.18)"></div><div style="left:489px;top:919px;width:20px;height:16px;background:#00ff00;box-shadow:inset 0 0 0 1px rgba(128,128,128,.18)"></div><div style="left:489px;top:936px;width:20px;height:16px;background:#24221c;box-shadow:inset 0 0 0 1px rgba(128,128,128,.18)"></div><div style="left:510px;top:919px;width:20px;height:16px;background:#008080;box-shadow:inset 0 0 0 1px rgba(128,128,128,.18)"></div><div style="left:510px;top:936px;width:20px;height:16px;background:#484538;box-shadow:inset 0 0 0 1px rgba(128,128,128,.18)"></div><div style="left:531px;top:919px;width:20px;height:16px;background:#00ffff;box-shadow:inset 0 0 0 1px rgba(128,128,128,.18)"></div><div style="left:531px;top:936px;width:20px;height:16px;background:#6c6754;box-shadow:inset 0 0 0 1px rgba(128,128,128,.18)"></div><div style="left:552px;top:919px;width:20px;height:16px;background:#000080;box-shadow:inset 0 0 0 1px rgba(128,128,128,.18)"></div><div style="left:552px;top:936px;width:20px;height:16px;background:#8f8970;box-shadow:inset 0 0 0 1px rgba(128,128,128,.18)"></div><div style="left:573px;top:919px;width:20px;height:16px;background:#0000ff;box-shadow:inset 0 0 0 1px rgba(128,128,128,.18)"></div><div style="left:573px;top:936px;width:20px;height:16px;background:#aba793;box-shadow:inset 0 0 0 1px rgba(128,128,128,.18)"></div><div style="left:594px;top:919px;width:20px;height:16px;background:#800080;box-shadow:inset 0 0 0 1px rgba(128,128,128,.18)"></div><div style="left:594px;top:936px;width:20px;height:16px;background:#c7c4b7;box-shadow:inset 0 0 0 1px rgba(128,128,128,.18)"></div><div style="left:615px;top:919px;width:20px;height:16px;background:#ff00ff;box-shadow:inset 0 0 0 1px rgba(128,128,128,.18)"></div><div style="left:615px;top:936px;width:20px;height:16px;background:#e3e2db;box-shadow:inset 0 0 0 1px rgba(128,128,128,.18)"></div><div style="left:636px;top:919px;width:20px;height:16px;background:#2a0000;box-shadow:inset 0 0 0 1px rgba(128,128,128,.18)"></div><div style="left:636px;top:936px;width:20px;height:16px;background:#222a00;box-shadow:inset 0 0 0 1px rgba(128,128,128,.18)"></div><div style="left:657px;top:919px;width:20px;height:16px;background:#550000;box-shadow:inset 0 0 0 1px rgba(128,128,128,.18)"></div><div style="left:657px;top:936px;width:20px;height:16px;background:#445500;box-shadow:inset 0 0 0 1px rgba(128,128,128,.18)"></div><div style="left:678px;top:919px;width:20px;height:16px;background:#800000;box-shadow:inset 0 0 0 1px rgba(128,128,128,.18)"></div><div style="left:678px;top:936px;width:20px;height:16px;background:#668000;box-shadow:inset 0 0 0 1px rgba(128,128,128,.18)"></div><div style="left:699px;top:919px;width:20px;height:16px;background:#aa0000;box-shadow:inset 0 0 0 1px rgba(128,128,128,.18)"></div><div style="left:699px;top:936px;width:20px;height:16px;background:#88aa00;box-shadow:inset 0 0 0 1px rgba(128,128,128,.18)"></div><div style="left:720px;top:919px;width:20px;height:16px;background:#d40000;box-shadow:inset 0 0 0 1px rgba(128,128,128,.18)"></div><div style="left:720px;top:936px;width:20px;height:16px;background:#aad400;box-shadow:inset 0 0 0 1px rgba(128,128,128,.18)"></div><div style="left:741px;top:919px;width:20px;height:16px;background:#ff0000;box-shadow:inset 0 0 0 1px rgba(128,128,128,.18)"></div><div style="left:741px;top:936px;width:20px;height:16px;background:#ccff00;box-shadow:inset 0 0 0 1px rgba(128,128,128,.18)"></div><div style="left:762px;top:919px;width:20px;height:16px;background:#ff2b2b;box-shadow:inset 0 0 0 1px rgba(128,128,128,.18)"></div><div style="left:762px;top:936px;width:20px;height:16px;background:#d4ff2b;box-shadow:inset 0 0 0 1px rgba(128,128,128,.18)"></div><div style="left:783px;top:919px;width:20px;height:16px;background:#ff5555;box-shadow:inset 0 0 0 1px rgba(128,128,128,.18)"></div><div style="left:783px;top:936px;width:20px;height:16px;background:#ddff55;box-shadow:inset 0 0 0 1px rgba(128,128,128,.18)"></div><div style="left:804px;top:919px;width:20px;height:16px;background:#ff8080;box-shadow:inset 0 0 0 1px rgba(128,128,128,.18)"></div><div style="left:804px;top:936px;width:20px;height:16px;background:#e5ff80;box-shadow:inset 0 0 0 1px rgba(128,128,128,.18)"></div><div style="left:825px;top:919px;width:20px;height:16px;background:#ffaaaa;box-shadow:inset 0 0 0 1px rgba(128,128,128,.18)"></div><div style="left:825px;top:936px;width:20px;height:16px;background:#eeffaa;box-shadow:inset 0 0 0 1px rgba(128,128,128,.18)"></div><div style="left:846px;top:919px;width:20px;height:16px;background:#ffd4d4;box-shadow:inset 0 0 0 1px rgba(128,128,128,.18)"></div><div style="left:846px;top:936px;width:20px;height:16px;background:#f6ffd4;box-shadow:inset 0 0 0 1px rgba(128,128,128,.18)"></div><div style="left:867px;top:919px;width:20px;height:16px;background:#280b0b;box-shadow:inset 0 0 0 1px rgba(128,128,128,.18)"></div><div style="left:867px;top:936px;width:20px;height:16px;background:#22280b;box-shadow:inset 0 0 0 1px rgba(128,128,128,.18)"></div><div style="left:888px;top:919px;width:20px;height:16px;background:#501616;box-shadow:inset 0 0 0 1px rgba(128,128,128,.18)"></div><div style="left:888px;top:936px;width:20px;height:16px;background:#445016;box-shadow:inset 0 0 0 1px rgba(128,128,128,.18)"></div><div style="left:909px;top:919px;width:20px;height:16px;background:#782121;box-shadow:inset 0 0 0 1px rgba(128,128,128,.18)"></div><div style="left:909px;top:936px;width:20px;height:16px;background:#677821;box-shadow:inset 0 0 0 1px rgba(128,128,128,.18)"></div><div style="left:930px;top:919px;width:20px;height:16px;background:#a02c2c;box-shadow:inset 0 0 0 1px rgba(128,128,128,.18)"></div><div style="left:930px;top:936px;width:20px;height:16px;background:#89a02c;box-shadow:inset 0 0 0 1px rgba(128,128,128,.18)"></div><div style="left:951px;top:919px;width:20px;height:16px;background:#c83737;box-shadow:inset 0 0 0 1px rgba(128,128,128,.18)"></div><div style="left:951px;top:936px;width:20px;height:16px;background:#abc837;box-shadow:inset 0 0 0 1px rgba(128,128,128,.18)"></div><div style="left:972px;top:919px;width:20px;height:16px;background:#d35f5f;box-shadow:inset 0 0 0 1px rgba(128,128,128,.18)"></div><div style="left:972px;top:936px;width:20px;height:16px;background:#bcd35f;box-shadow:inset 0 0 0 1px rgba(128,128,128,.18)"></div><div style="left:993px;top:919px;width:20px;height:16px;background:#de8787;box-shadow:inset 0 0 0 1px rgba(128,128,128,.18)"></div><div style="left:993px;top:936px;width:20px;height:16px;background:#cdde87;box-shadow:inset 0 0 0 1px rgba(128,128,128,.18)"></div><div style="left:1014px;top:919px;width:20px;height:16px;background:#e9afaf;box-shadow:inset 0 0 0 1px rgba(128,128,128,.18)"></div><div style="left:1014px;top:936px;width:20px;height:16px;background:#dde9af;box-shadow:inset 0 0 0 1px rgba(128,128,128,.18)"></div><div style="left:1035px;top:919px;width:20px;height:16px;background:#f4d7d7;box-shadow:inset 0 0 0 1px rgba(128,128,128,.18)"></div><div style="left:1035px;top:936px;width:20px;height:16px;background:#eef4d7;box-shadow:inset 0 0 0 1px rgba(128,128,128,.18)"></div><div style="left:1056px;top:919px;width:20px;height:16px;background:#241c1c;box-shadow:inset 0 0 0 1px rgba(128,128,128,.18)"></div><div style="left:1056px;top:936px;width:20px;height:16px;background:#22241c;box-shadow:inset 0 0 0 1px rgba(128,128,128,.18)"></div><div style="left:1077px;top:919px;width:20px;height:16px;background:#483838;box-shadow:inset 0 0 0 1px rgba(128,128,128,.18)"></div><div style="left:1077px;top:936px;width:20px;height:16px;background:#454838;box-shadow:inset 0 0 0 1px rgba(128,128,128,.18)"></div><div style="left:1098px;top:919px;width:20px;height:16px;background:#6c5454;box-shadow:inset 0 0 0 1px rgba(128,128,128,.18)"></div><div style="left:1098px;top:936px;width:20px;height:16px;background:#676c54;box-shadow:inset 0 0 0 1px rgba(128,128,128,.18)"></div><div style="left:1119px;top:919px;width:20px;height:16px;background:#8f7070;box-shadow:inset 0 0 0 1px rgba(128,128,128,.18)"></div><div style="left:1119px;top:936px;width:20px;height:16px;background:#898f70;box-shadow:inset 0 0 0 1px rgba(128,128,128,.18)"></div><div style="left:1140px;top:919px;width:20px;height:16px;background:#ab9393;box-shadow:inset 0 0 0 1px rgba(128,128,128,.18)"></div><div style="left:1140px;top:936px;width:20px;height:16px;background:#a7ab93;box-shadow:inset 0 0 0 1px rgba(128,128,128,.18)"></div><div style="left:1161px;top:919px;width:20px;height:16px;background:#c7b7b7;box-shadow:inset 0 0 0 1px rgba(128,128,128,.18)"></div><div style="left:1161px;top:936px;width:20px;height:16px;background:#c4c7b7;box-shadow:inset 0 0 0 1px rgba(128,128,128,.18)"></div><div style="left:1182px;top:919px;width:20px;height:16px;background:#e3dbdb;box-shadow:inset 0 0 0 1px rgba(128,128,128,.18)"></div><div style="left:1182px;top:936px;width:20px;height:16px;background:#e2e3db;box-shadow:inset 0 0 0 1px rgba(128,128,128,.18)"></div><div style="left:1203px;top:919px;width:20px;height:16px;background:#2a1100;box-shadow:inset 0 0 0 1px rgba(128,128,128,.18)"></div><div style="left:1203px;top:936px;width:20px;height:16px;background:#112a00;box-shadow:inset 0 0 0 1px rgba(128,128,128,.18)"></div><div style="left:1224px;top:919px;width:20px;height:16px;background:#552200;box-shadow:inset 0 0 0 1px rgba(128,128,128,.18)"></div><div style="left:1224px;top:936px;width:20px;height:16px;background:#225500;box-shadow:inset 0 0 0 1px rgba(128,128,128,.18)"></div><div style="left:1245px;top:919px;width:20px;height:16px;background:#803300;box-shadow:inset 0 0 0 1px rgba(128,128,128,.18)"></div><div style="left:1245px;top:936px;width:20px;height:16px;background:#338000;box-shadow:inset 0 0 0 1px rgba(128,128,128,.18)"></div><div style="left:1266px;top:919px;width:20px;height:16px;background:#aa4400;box-shadow:inset 0 0 0 1px rgba(128,128,128,.18)"></div><div style="left:1266px;top:936px;width:20px;height:16px;background:#44aa00;box-shadow:inset 0 0 0 1px rgba(128,128,128,.18)"></div><div style="left:1287px;top:919px;width:20px;height:16px;background:#d45500;box-shadow:inset 0 0 0 1px rgba(128,128,128,.18)"></div><div style="left:1287px;top:936px;width:20px;height:16px;background:#55d400;box-shadow:inset 0 0 0 1px rgba(128,128,128,.18)"></div><div style="left:1308px;top:919px;width:20px;height:16px;background:#ff6600;box-shadow:inset 0 0 0 1px rgba(128,128,128,.18)"></div><div style="left:1308px;top:936px;width:20px;height:16px;background:#66ff00;box-shadow:inset 0 0 0 1px rgba(128,128,128,.18)"></div><div style="left:1329px;top:919px;width:20px;height:16px;background:#ff802b;box-shadow:inset 0 0 0 1px rgba(128,128,128,.18)"></div><div style="left:1329px;top:936px;width:20px;height:16px;background:#80ff2b;box-shadow:inset 0 0 0 1px rgba(128,128,128,.18)"></div><div style="left:1350px;top:919px;width:20px;height:16px;background:#ff9955;box-shadow:inset 0 0 0 1px rgba(128,128,128,.18)"></div><div style="left:1350px;top:936px;width:20px;height:16px;background:#99ff55;box-shadow:inset 0 0 0 1px rgba(128,128,128,.18)"></div><div style="left:1371px;top:919px;width:20px;height:16px;background:#ffb280;box-shadow:inset 0 0 0 1px rgba(128,128,128,.18)"></div><div style="left:1371px;top:936px;width:20px;height:16px;background:#b2ff80;box-shadow:inset 0 0 0 1px rgba(128,128,128,.18)"></div><div style="left:1392px;top:919px;width:20px;height:16px;background:#ffccaa;box-shadow:inset 0 0 0 1px rgba(128,128,128,.18)"></div><div style="left:1392px;top:936px;width:20px;height:16px;background:#ccffaa;box-shadow:inset 0 0 0 1px rgba(128,128,128,.18)"></div><div style="left:1413px;top:919px;width:20px;height:16px;background:#ffe6d4;box-shadow:inset 0 0 0 1px rgba(128,128,128,.18)"></div><div style="left:1413px;top:936px;width:20px;height:16px;background:#e5ffd4;box-shadow:inset 0 0 0 1px rgba(128,128,128,.18)"></div><div style="left:1434px;top:919px;width:20px;height:16px;background:#28170b;box-shadow:inset 0 0 0 1px rgba(128,128,128,.18)"></div><div style="left:1434px;top:936px;width:20px;height:16px;background:#17280b;box-shadow:inset 0 0 0 1px rgba(128,128,128,.18)"></div><div style="left:1455px;top:919px;width:20px;height:16px;background:#502d16;box-shadow:inset 0 0 0 1px rgba(128,128,128,.18)"></div><div style="left:1455px;top:936px;width:20px;height:16px;background:#2d5016;box-shadow:inset 0 0 0 1px rgba(128,128,128,.18)"></div><div style="left:1476px;top:919px;width:20px;height:16px;background:#784421;box-shadow:inset 0 0 0 1px rgba(128,128,128,.18)"></div><div style="left:1476px;top:936px;width:20px;height:16px;background:#447821;box-shadow:inset 0 0 0 1px rgba(128,128,128,.18)"></div><div style="left:1497px;top:919px;width:20px;height:16px;background:#a05a2c;box-shadow:inset 0 0 0 1px rgba(128,128,128,.18)"></div><div style="left:1497px;top:936px;width:20px;height:16px;background:#5aa02c;box-shadow:inset 0 0 0 1px rgba(128,128,128,.18)"></div><div style="left:1518px;top:919px;width:20px;height:16px;background:#c87137;box-shadow:inset 0 0 0 1px rgba(128,128,128,.18)"></div><div style="left:1518px;top:936px;width:20px;height:16px;background:#71c837;box-shadow:inset 0 0 0 1px rgba(128,128,128,.18)"></div><div style="left:1539px;top:919px;width:20px;height:16px;background:#d38d5f;box-shadow:inset 0 0 0 1px rgba(128,128,128,.18)"></div><div style="left:1539px;top:936px;width:20px;height:16px;background:#8dd35f;box-shadow:inset 0 0 0 1px rgba(128,128,128,.18)"></div><div style="left:1560px;top:919px;width:20px;height:16px;background:#deaa87;box-shadow:inset 0 0 0 1px rgba(128,128,128,.18)"></div><div style="left:1560px;top:936px;width:20px;height:16px;background:#aade87;box-shadow:inset 0 0 0 1px rgba(128,128,128,.18)"></div><div style="left:1581px;top:919px;width:20px;height:16px;background:#e9c6af;box-shadow:inset 0 0 0 1px rgba(128,128,128,.18)"></div><div style="left:1581px;top:936px;width:20px;height:16px;background:#c6e9af;box-shadow:inset 0 0 0 1px rgba(128,128,128,.18)"></div><div style="left:1602px;top:919px;width:20px;height:16px;background:#f4e3d7;box-shadow:inset 0 0 0 1px rgba(128,128,128,.18)"></div><div style="left:1602px;top:936px;width:20px;height:16px;background:#e3f4d7;box-shadow:inset 0 0 0 1px rgba(128,128,128,.18)"></div><div style="left:1623px;top:919px;width:20px;height:16px;background:#241f1c;box-shadow:inset 0 0 0 1px rgba(128,128,128,.18)"></div><div style="left:1623px;top:936px;width:20px;height:16px;background:#1f241c;box-shadow:inset 0 0 0 1px rgba(128,128,128,.18)"></div><div style="left:1644px;top:919px;width:20px;height:16px;background:#483e38;box-shadow:inset 0 0 0 1px rgba(128,128,128,.18)"></div><div style="left:1644px;top:936px;width:20px;height:16px;background:#3e4838;box-shadow:inset 0 0 0 1px rgba(128,128,128,.18)"></div><div style="left:1665px;top:919px;width:20px;height:16px;background:#6c5d54;box-shadow:inset 0 0 0 1px rgba(128,128,128,.18)"></div><div style="left:1665px;top:936px;width:20px;height:16px;background:#5d6c54;box-shadow:inset 0 0 0 1px rgba(128,128,128,.18)"></div><div style="left:1686px;top:919px;width:20px;height:16px;background:#8f7c70;box-shadow:inset 0 0 0 1px rgba(128,128,128,.18)"></div><div style="left:1686px;top:936px;width:20px;height:16px;background:#7c8f70;box-shadow:inset 0 0 0 1px rgba(128,128,128,.18)"></div><div style="left:1707px;top:919px;width:20px;height:16px;background:#ab9d93;box-shadow:inset 0 0 0 1px rgba(128,128,128,.18)"></div><div style="left:1707px;top:936px;width:20px;height:16px;background:#9dab93;box-shadow:inset 0 0 0 1px rgba(128,128,128,.18)"></div><div style="left:1728px;top:919px;width:20px;height:16px;background:#c7beb7;box-shadow:inset 0 0 0 1px rgba(128,128,128,.18)"></div><div style="left:1728px;top:936px;width:20px;height:16px;background:#bec7b7;box-shadow:inset 0 0 0 1px rgba(128,128,128,.18)"></div><div style="left:1749px;top:919px;width:20px;height:16px;background:#e3dedb;box-shadow:inset 0 0 0 1px rgba(128,128,128,.18)"></div><div style="left:1749px;top:936px;width:20px;height:16px;background:#dee3db;box-shadow:inset 0 0 0 1px rgba(128,128,128,.18)"></div><div style="left:1770px;top:919px;width:20px;height:16px;background:#2a2200;box-shadow:inset 0 0 0 1px rgba(128,128,128,.18)"></div><div style="left:1770px;top:936px;width:20px;height:16px;background:#002a00;box-shadow:inset 0 0 0 1px rgba(128,128,128,.18)"></div><div style="left:1791px;top:919px;width:20px;height:16px;background:#554400;box-shadow:inset 0 0 0 1px rgba(128,128,128,.18)"></div><div style="left:1791px;top:936px;width:20px;height:16px;background:#005500;box-shadow:inset 0 0 0 1px rgba(128,128,128,.18)"></div><div style="left:1812px;top:919px;width:20px;height:16px;background:#806600;box-shadow:inset 0 0 0 1px rgba(128,128,128,.18)"></div><div style="left:1812px;top:936px;width:20px;height:16px;background:#008000;box-shadow:inset 0 0 0 1px rgba(128,128,128,.18)"></div><div style="left:1833px;top:919px;width:20px;height:16px;background:#aa8800;box-shadow:inset 0 0 0 1px rgba(128,128,128,.18)"></div><div style="left:1833px;top:936px;width:20px;height:16px;background:#00aa00;box-shadow:inset 0 0 0 1px rgba(128,128,128,.18)"></div><div style="left:1px;top:919px;width:33px;height:34px;background:#fff"></div><svg style="left:1px;top:919px" width="33" height="34"><path d="M3.5 3.5L29.5 30.5M29.5 3.5L3.5 30.5" stroke="#c8283c" stroke-width="3"/></svg><div style="left:36px;top:919px;width:32px;height:34px;background:#000"></div><div style="left:69px;top:919px;width:33px;height:34px;background:#808080"></div><div style="left:103px;top:919px;width:33px;height:34px;background:#fff"></div><span class="t" style="left:875.66px;top:7px;font-size:11.5px;color:#dedede;font-weight:bold;transform:scaleX(0.9862);">New document 1 - Inkscape</span><span class="t" style="left:7.45px;top:30px;font-size:14.5px;color:#e4e4e4;font-weight:normal;transform:scaleX(0.9056);">File</span><span class="t" style="left:44.40px;top:30px;font-size:14.5px;color:#e4e4e4;font-weight:normal;transform:scaleX(0.9491);">Edit</span><span class="t" style="left:83.93px;top:30px;font-size:14.5px;color:#e4e4e4;font-weight:normal;transform:scaleX(0.9002);">View</span><span class="t" style="left:127.17px;top:30px;font-size:14.5px;color:#e4e4e4;font-weight:normal;transform:scaleX(0.9721);">Layer</span><span class="t" style="left:178.78px;top:30px;font-size:14.5px;color:#e4e4e4;font-weight:normal;transform:scaleX(0.9487);">Object</span><span class="t" style="left:234.46px;top:30px;font-size:14.5px;color:#e4e4e4;font-weight:normal;transform:scaleX(0.9821);">Path</span><span class="t" style="left:279.33px;top:30px;font-size:14.5px;color:#e4e4e4;font-weight:normal;transform:scaleX(0.9323);">Text</span><span class="t" style="left:319.25px;top:30px;font-size:14.5px;color:#e4e4e4;font-weight:normal;transform:scaleX(0.9954);">Filters</span><span class="t" style="left:373.40px;top:30px;font-size:14.5px;color:#e4e4e4;font-weight:normal;transform:scaleX(0.9460);">Extensions</span><span class="t" style="left:455.22px;top:30px;font-size:14.5px;color:#e4e4e4;font-weight:normal;transform:scaleX(1.0193);">Help</span><div style="left:168px;top:54px;width:1px;height:34px;background:#2b2b2b"></div><div style="left:256px;top:54px;width:1px;height:34px;background:#2b2b2b"></div><div style="left:344px;top:54px;width:1px;height:34px;background:#2b2b2b"></div><div style="left:473px;top:54px;width:1px;height:34px;background:#2b2b2b"></div><div style="left:643px;top:54px;width:1px;height:34px;background:#2b2b2b"></div><div style="left:772px;top:54px;width:1px;height:34px;background:#2b2b2b"></div><div style="left:860px;top:54px;width:1px;height:34px;background:#2b2b2b"></div><div style="left:1112px;top:54px;width:1px;height:34px;background:#2b2b2b"></div><div style="left:169px;top:96px;width:1px;height:34px;background:#2b2b2b"></div><div style="left:338px;top:96px;width:1px;height:34px;background:#2b2b2b"></div><div style="left:509px;top:96px;width:1px;height:34px;background:#2b2b2b"></div><div style="left:1194px;top:96px;width:1px;height:34px;background:#2b2b2b"></div><div style="left:528px;top:96px;width:122px;height:34px;border:1px solid #1f1f1f;border-radius:5px;background:#333333"></div><div style="left:615px;top:97px;width:1px;height:32px;background:#2a2a2a"></div><div style="left:632px;top:97px;width:1px;height:32px;background:#2a2a2a"></div><div style="left:617.5px;top:112px;width:12px;height:1.6px;background:#5e5e5e"></div><div style="left:635.0px;top:112px;width:12px;height:1.6px;background:#5e5e5e"></div><div style="left:640.2px;top:107px;width:1.6px;height:12px;background:#5e5e5e"></div><span class="t" style="left:513.46px;top:106px;font-size:14.5px;color:#a8a8a8;font-weight:normal;transform:scaleX(0.9363);">X:</span><span class="t" style="left:534.93px;top:106px;font-size:14.5px;color:#a0a0a0;font-weight:normal;transform:scaleX(0.9812);">0.000</span><div style="left:669px;top:96px;width:122px;height:34px;border:1px solid #1f1f1f;border-radius:5px;background:#333333"></div><div style="left:756px;top:97px;width:1px;height:32px;background:#2a2a2a"></div><div style="left:773px;top:97px;width:1px;height:32px;background:#2a2a2a"></div><div style="left:758.5px;top:112px;width:12px;height:1.6px;background:#5e5e5e"></div><div style="left:776.0px;top:112px;width:12px;height:1.6px;background:#5e5e5e"></div><div style="left:781.2px;top:107px;width:1.6px;height:12px;background:#5e5e5e"></div><span class="t" style="left:654.61px;top:106px;font-size:14.5px;color:#a8a8a8;font-weight:normal;transform:scaleX(1.0748);">Y:</span><span class="t" style="left:675.93px;top:106px;font-size:14.5px;color:#a0a0a0;font-weight:normal;transform:scaleX(0.9812);">0.000</span><div style="left:814px;top:96px;width:122px;height:34px;border:1px solid #1f1f1f;border-radius:5px;background:#333333"></div><div style="left:901px;top:97px;width:1px;height:32px;background:#2a2a2a"></div><div style="left:918px;top:97px;width:1px;height:32px;background:#2a2a2a"></div><div style="left:903.5px;top:112px;width:12px;height:1.6px;background:#5e5e5e"></div><div style="left:921.0px;top:112px;width:12px;height:1.6px;background:#5e5e5e"></div><div style="left:926.2px;top:107px;width:1.6px;height:12px;background:#5e5e5e"></div><span class="t" style="left:795.93px;top:106px;font-size:14.5px;color:#a8a8a8;font-weight:normal;transform:scaleX(0.9362);">W:</span><span class="t" style="left:820.93px;top:106px;font-size:14.5px;color:#a0a0a0;font-weight:normal;transform:scaleX(0.9812);">0.000</span><div style="left:998px;top:96px;width:122px;height:34px;border:1px solid #1f1f1f;border-radius:5px;background:#333333"></div><div style="left:1085px;top:97px;width:1px;height:32px;background:#2a2a2a"></div><div style="left:1103px;top:97px;width:1px;height:32px;background:#2a2a2a"></div><div style="left:1088.0px;top:112px;width:12px;height:1.6px;background:#5e5e5e"></div><div style="left:1105.5px;top:112px;width:12px;height:1.6px;background:#5e5e5e"></div><div style="left:1110.7px;top:107px;width:1.6px;height:12px;background:#5e5e5e"></div><span class="t" style="left:981.29px;top:106px;font-size:14.5px;color:#a8a8a8;font-weight:normal;transform:scaleX(1.0449);">H:</span><span class="t" style="left:1004.93px;top:106px;font-size:14.5px;color:#a0a0a0;font-weight:normal;transform:scaleX(0.9812);">0.000</span><div style="left:1125px;top:96px;width:63px;height:34px;border:1px solid #1f1f1f;border-radius:5px;background:#333333"></div><span class="t" style="left:1136.51px;top:106px;font-size:14.5px;color:#e6e6e6;font-weight:normal;transform:scaleX(1.0524);">mm</span><div style="left:1200px;top:96px;width:35.5px;height:34px;border:1px solid #0e2038;border-radius:5px;background:linear-gradient(#264c82,#1f3c68)"></div><div style="left:1241.5px;top:96px;width:35.5px;height:34px;border:1px solid #0e2038;border-radius:5px;background:linear-gradient(#264c82,#1f3c68)"></div><div style="left:1282.5px;top:96px;width:35.5px;height:34px;border:1px solid #0e2038;border-radius:5px;background:linear-gradient(#264c82,#1f3c68)"></div><div style="left:1323.5px;top:96px;width:35.5px;height:34px;border:1px solid #0e2038;border-radius:5px;background:linear-gradient(#264c82,#1f3c68)"></div><div style="left:2px;top:134px;width:22px;height:32px;border:1px solid #10243f;border-radius:5px;background:linear-gradient(#25497c,#1f3c66)"></div><div style="left:0px;top:232px;width:26px;height:1px;background:#2b2b2b"></div><div style="left:0px;top:394px;width:26px;height:1px;background:#2b2b2b"></div><div style="left:0px;top:525px;width:26px;height:1px;background:#2b2b2b"></div><div style="left:0px;top:656px;width:26px;height:1px;background:#2b2b2b"></div><div style="left:0px;top:818px;width:26px;height:1px;background:#2b2b2b"></div><div style="left:1512px;top:134px;width:12px;height:783px;background:#363636"></div><div style="left:1524px;top:139px;width:391px;height:773px;background:#2d2d2d"></div><div style="left:1524px;top:139px;width:391px;height:36px;background:#2c2c2c"></div><div style="left:1524px;top:139px;width:73px;height:36px;background:#2a2a2a"></div><div style="left:1597px;top:139px;width:149px;height:36px;background:#303030"></div><div style="left:1597px;top:171px;width:149px;height:4px;background:#1d5cb0"></div><div style="left:1884px;top:142px;width:30px;height:30px;background:#323232;border-radius:5px"></div><div style="left:1524px;top:175px;width:391px;height:1px;background:#222222"></div><div style="left:1525px;top:177px;width:389px;height:632px;border:1px solid #1f1f1f;background:#2d2d2d"></div><div style="left:1526px;top:204px;width:387px;height:1px;background:#1f1f1f"></div><div style="left:1533px;top:202px;width:50px;height:3px;background:#1d5cb0"></div><span class="t" style="left:1628.54px;top:150px;font-size:14.5px;color:#e6e6e6;font-weight:normal;transform:scaleX(0.9181);">Fill and Stroke</span><span class="t" style="left:1559.44px;top:185px;font-size:14.5px;color:#e6e6e6;font-weight:normal;transform:scaleX(0.9155);">Fill</span><span class="t" style="left:1617.88px;top:185px;font-size:14.5px;color:#e6e6e6;font-weight:normal;transform:scaleX(0.9461);">Stroke paint</span><span class="t" style="left:1732.87px;top:185px;font-size:14.5px;color:#e6e6e6;font-weight:normal;transform:scaleX(0.9603);">Stroke style</span><span class="t" style="left:1533.61px;top:244px;font-size:14.5px;color:#eeeeee;font-weight:bold;transform:scaleX(0.9439);">No objects</span><div style="left:1854px;top:210px;width:26px;height:26px;border:1px solid #0e2038;border-radius:5px;background:linear-gradient(#264c82,#1f3c68)"></div><span class="t" style="left:1710.36px;top:822px;font-size:14.5px;color:#a8a8a8;font-weight:normal;transform:scaleX(0.9838);">Blend mode:</span><div style="left:1794px;top:812px;width:118px;height:33px;border:1px solid #1f1f1f;border-radius:5px;background:#2e2e2e"></div><span class="t" style="left:1805.42px;top:822px;font-size:14.5px;color:#a8a8a8;font-weight:normal;transform:scaleX(1.0137);">Normal</span><div style="left:1529px;top:849px;width:380px;height:26px;border:1px solid #1f1f1f;border-radius:5px;background:#303030"></div><div style="left:1832px;top:850px;width:1px;height:24px;background:#202020"></div><div style="left:1875px;top:850px;width:1px;height:24px;background:#282828"></div><div style="left:1892px;top:850px;width:1px;height:24px;background:#282828"></div><span class="t" style="left:1533.20px;top:856px;font-size:14.5px;color:#a8a8a8;font-weight:normal;transform:scaleX(0.9480);">Blur (%)</span><span class="t" style="left:1838.63px;top:856px;font-size:14.5px;color:#a8a8a8;font-weight:normal;transform:scaleX(0.9912);">0.0</span><div style="left:1878px;top:861.5px;width:12px;height:1.6px;background:#5e5e5e"></div><div style="left:1895px;top:861.5px;width:12px;height:1.6px;background:#6a6a6a"></div><div style="left:1900.2px;top:856px;width:1.6px;height:12px;background:#6a6a6a"></div><div style="left:1529px;top:880px;width:380px;height:26px;border:1px solid #1f1f1f;border-radius:5px;background:#303030"></div><div style="left:1832px;top:881px;width:1px;height:24px;background:#202020"></div><div style="left:1875px;top:881px;width:1px;height:24px;background:#282828"></div><div style="left:1892px;top:881px;width:1px;height:24px;background:#282828"></div><span class="t" style="left:1533.70px;top:887px;font-size:14.5px;color:#a8a8a8;font-weight:normal;transform:scaleX(0.9128);">Opacity (%)</span><span class="t" style="left:1838.63px;top:887px;font-size:14.5px;color:#a8a8a8;font-weight:normal;transform:scaleX(0.9912);">0.0</span><div style="left:1878px;top:892.5px;width:12px;height:1.6px;background:#5e5e5e"></div><div style="left:1895px;top:892.5px;width:12px;height:1.6px;background:#6a6a6a"></div><div style="left:1900.2px;top:887px;width:1.6px;height:12px;background:#6a6a6a"></div><span class="t" style="left:23.32px;top:957px;font-size:14.5px;color:#e0e0e0;font-weight:normal;transform:scaleX(0.9345);">Fill:</span><span class="t" style="left:-0.03px;top:976px;font-size:14.5px;color:#e0e0e0;font-weight:normal;transform:scaleX(0.9673);">Stroke:</span><span class="t" style="left:76.35px;top:957px;font-size:14.5px;color:#e0e0e0;font-weight:normal;transform:scaleX(0.9921);">N/A</span><span class="t" style="left:76.35px;top:976px;font-size:14.5px;color:#e0e0e0;font-weight:normal;transform:scaleX(0.9921);">N/A</span><span class="t" style="left:162.76px;top:966px;font-size:14.5px;color:#e0e0e0;font-weight:normal;transform:scaleX(0.9745);">O:</span><div style="left:182px;top:954px;width:72px;height:37px;border:1px solid #1f1f1f;border-radius:5px;background:#333333"></div><div style="left:219px;top:955px;width:1px;height:35px;background:#2a2a2a"></div><div style="left:236px;top:955px;width:1px;height:35px;background:#2a2a2a"></div><div style="left:221.5px;top:972px;width:12px;height:1.6px;background:#5e5e5e"></div><div style="left:239.0px;top:972px;width:12px;height:1.6px;background:#5e5e5e"></div><div style="left:244.2px;top:966px;width:1.6px;height:12px;background:#5e5e5e"></div><span class="t" style="left:188.61px;top:966px;font-size:14.5px;color:#8a8a8a;font-weight:normal;transform:scaleX(0.9979);">100</span><div style="left:265px;top:963px;width:3px;height:19px;background:#3f7de0;border-radius:1px"></div><span class="t" style="left:273.42px;top:966px;font-size:14.5px;color:#e0e0e0;font-weight:normal;transform:scaleX(0.9346);">Layer 1</span><div style="left:403px;top:958px;width:1px;height:30px;background:#2b2b2b"></div><span class="t" style="left:409.10px;top:966px;font-size:14.5px;color:#e0e0e0;font-weight:normal;transform:scaleX(0.9451);">No objects selected. Click, Shift+click, Alt+scroll mouse on top of objects, or drag around objects to select.</span><div style="left:1527px;top:954px;width:36px;height:37px;border:1px solid #1f1f1f;border-radius:5px"></div><div style="left:1600px;top:958px;width:1px;height:30px;background:#2b2b2b"></div><span class="t" style="left:1605.67px;top:957px;font-size:14.5px;color:#e0e0e0;font-weight:normal;transform:scaleX(0.9195);">X:</span><span class="t" style="left:1605.64px;top:976px;font-size:14.5px;color:#e0e0e0;font-weight:normal;transform:scaleX(0.9852);">Y:</span><span class="t" style="left:1636.42px;top:957px;font-size:14.5px;color:#e0e0e0;font-weight:normal;transform:scaleX(0.9958);">0.00</span><span class="t" style="left:1636.42px;top:976px;font-size:14.5px;color:#e0e0e0;font-weight:normal;transform:scaleX(0.9958);">0.00</span><span class="t" style="left:1679.57px;top:966px;font-size:14.5px;color:#e0e0e0;font-weight:normal;transform:scaleX(0.9917);">Z:</span><div style="left:1696px;top:954px;width:90px;height:37px;border:1px solid #1f1f1f;border-radius:5px;background:#333333"></div><div style="left:1751px;top:955px;width:1px;height:35px;background:#2a2a2a"></div><div style="left:1768px;top:955px;width:1px;height:35px;background:#2a2a2a"></div><div style="left:1753.5px;top:972px;width:12px;height:1.6px;background:#e6e6e6"></div><div style="left:1771.0px;top:972px;width:12px;height:1.6px;background:#e6e6e6"></div><div style="left:1776.2px;top:966px;width:1.6px;height:12px;background:#e6e6e6"></div><span class="t" style="left:1708.72px;top:966px;font-size:14.5px;color:#e0e0e0;font-weight:normal;transform:scaleX(0.9574);">44%</span><span class="t" style="left:1794.93px;top:966px;font-size:14.5px;color:#e0e0e0;font-weight:normal;transform:scaleX(0.9195);">R:</span><div style="left:1812px;top:954px;width:97px;height:37px;border:1px solid #1f1f1f;border-radius:5px;background:#333333"></div><div style="left:1874px;top:955px;width:1px;height:35px;background:#2a2a2a"></div><div style="left:1892px;top:955px;width:1px;height:35px;background:#2a2a2a"></div><div style="left:1877.0px;top:972px;width:12px;height:1.6px;background:#e6e6e6"></div><div style="left:1894.5px;top:972px;width:12px;height:1.6px;background:#e6e6e6"></div><div style="left:1899.7px;top:966px;width:1.6px;height:12px;background:#e6e6e6"></div><span class="t" style="left:1827.39px;top:966px;font-size:14.5px;color:#e0e0e0;font-weight:normal;transform:scaleX(1.0445);">0.00°</span><svg style="left:14px;top:63px;" width="16" height="16" viewBox="0 0 16 16"><path fill="#ececec" fill-rule="evenodd" d="M0 2.8H9L12 5.8V16H0ZM2 4.8V14H10V7.5H7.5V4.8Z"/><polygon fill="#ececec" points="13.00,-0.20 13.88,1.79 16.04,2.01 14.43,3.46 14.88,5.59 13.00,4.50 11.12,5.59 11.57,3.46 9.96,2.01 12.12,1.79"/></svg><svg style="left:55px;top:64px;" width="16" height="16" viewBox="0 0 16 16"><path fill="#ececec" d="M0 1H5.5V3H14V5H2.5L1.5 12V1Z"/><path fill="#ececec" d="M0 1H2V15H0Z"/><path fill="#ececec" d="M3.2 7H16.5L15.2 15H1.5Z"/></svg><svg style="left:97px;top:63px;" width="16" height="16" viewBox="0 0 16 16"><rect fill="#ececec" x="6" y="0" width="2" height="6"/><polygon fill="#ececec" points="3,5.2 11,5.2 7,9.5"/><path fill="#ececec" d="M1.5 8.5L3 8.5 2 10.5H5V13H9V10.5H12L11 8.5 12.5 8.5 14 11V16.4H0V11Z"/></svg><svg style="left:138px;top:63px;" width="16" height="16" viewBox="0 0 16 16"><rect fill="#ececec" x="3" y="1" width="8" height="2.4" rx=".5"/><path fill="#ececec" d="M1 4.2H13Q14 4.2 14 5.2V11H11.5V8.8H2.5V11H0V5.2Q0 4.2 1 4.2Z"/><rect fill="#ececec" x="3" y="9.5" width="8" height="4.6"/></svg><svg style="left:185px;top:63px;" width="16" height="16" viewBox="0 0 16 16"><path fill="#ececec" fill-rule="evenodd" d="M2 0H9.5L14 4.5V15H2V9.5H4V13H12V5.5H9V2H4V6.5H2Z"/><rect fill="#ececec" x="0" y="7" width="6" height="2"/><polygon fill="#ececec" points="6,4.8 9.5,8 6,11.2"/></svg><svg style="left:225px;top:63px;" width="16" height="16" viewBox="0 0 16 16"><path fill="#ececec" fill-rule="evenodd" d="M0 0H7.5L12 4.5V7H10V5.5H7V2H2V13H10V10.5H12V15H0Z"/><rect fill="#ececec" x="7" y="8" width="6" height="2"/><polygon fill="#ececec" points="12.5,5.5 16,9 12.5,12.5"/></svg><svg style="left:273px;top:65px;" width="16" height="16" viewBox="0 0 16 16"><path fill="none" stroke="#6e6e6e" stroke-width="1.8" d="M2 5H8.5Q12.2 5 12.2 8.2T8.8 11.2"/><polygon fill="#6e6e6e" points="0,5 4.5,1 4.5,9"/></svg><svg style="left:315px;top:65px;" width="16" height="16" viewBox="0 0 16 16"><path fill="none" stroke="#6e6e6e" stroke-width="1.8" d="M11 5H4.5Q0.8 5 0.8 8.2T4.2 11.2"/><polygon fill="#6e6e6e" points="13,5 8.5,1 8.5,9"/></svg><svg style="left:360px;top:63px;" width="16" height="16" viewBox="0 0 16 16"><rect fill="#ececec" x="0" y="0" width="11" height="11"/><rect fill="#363636" x="4" y="4" width="12.5" height="12.5"/><rect fill="#ececec" x="5" y="5" width="11" height="11"/></svg><svg style="left:401px;top:63px;" width="16" height="16" viewBox="0 0 16 16"><circle cx="3.2" cy="12.8" r="2.3" fill="none" stroke="#ececec" stroke-width="1.9"/><circle cx="12.8" cy="12.8" r="2.3" fill="none" stroke="#ececec" stroke-width="1.9"/><path stroke="#ececec" stroke-width="1.9" d="M4.6 10.6L11.6 .2M11.4 10.6L4.4 .2"/></svg><svg style="left:442px;top:64px;" width="16" height="16" viewBox="0 0 16 16"><path fill="none" stroke="#ececec" stroke-width="1.5" d="M3.5 2.2H.8V14.8H13.2V2.2H10.5"/><rect fill="#ececec" x="4" y="0" width="6" height="3"/><path fill="#ececec" d="M3 4H11V11L9 13H3Z"/></svg><svg style="left:489px;top:63px;" width="16" height="16" viewBox="0 0 16 16"><circle cx="7.5" cy="7.5" r="7.4" fill="#ececec"/><path stroke="#ececec" stroke-width="2.2" stroke-linecap="round" d="M12 12L15 15"/><rect x="4" y="4" width="7" height="7" fill="none" stroke="#363636" stroke-width="1" stroke-dasharray="1 1"/></svg><svg style="left:530px;top:63px;" width="16" height="16" viewBox="0 0 16 16"><circle cx="7.5" cy="7.5" r="7.4" fill="#ececec"/><path stroke="#ececec" stroke-width="2.2" stroke-linecap="round" d="M12 12L15 15"/><rect x="3.5" y="3.5" width="8" height="8" fill="none" stroke="#363636" stroke-width="1"/><rect x="5.5" y="5.5" width="4" height="4" fill="#363636"/></svg><svg style="left:571px;top:63px;" width="16" height="16" viewBox="0 0 16 16"><circle cx="7.5" cy="7.5" r="7.4" fill="#ececec"/><path stroke="#ececec" stroke-width="2.2" stroke-linecap="round" d="M12 12L15 15"/><rect x="4.5" y="2.5" width="6" height="10" fill="none" stroke="#363636" stroke-width="1"/></svg><svg style="left:613px;top:63px;" width="16" height="16" viewBox="0 0 16 16"><rect fill="#ececec" x="2" y="2" width="9" height="12"/><path fill="none" stroke="#ececec" stroke-width="1" d="M.5 3V.5H3M10 .5H12.5V3M12.5 13V15.5H10M3 15.5H.5V13"/></svg><svg style="left:659px;top:63px;" width="16" height="16" viewBox="0 0 16 16"><rect fill="#ececec" x="0" y="0" width="11" height="11"/><rect fill="#363636" x="4" y="4" width="12.5" height="12.5"/><rect fill="#ececec" x="5" y="5" width="11" height="11"/></svg><svg style="left:700px;top:63px;" width="16" height="16" viewBox="0 0 16 16"><rect fill="#ececec" x="0" y="0" width="10" height="9.5"/><rect fill="#363636" x="4" y="4" width="12" height="12.5"/><rect fill="#ececec" x="5" y="5" width="10.5" height="11"/><rect fill="#363636" x="7" y="9.5" width="6.5" height="5"/><path fill="none" stroke="#363636" stroke-width="1.4" d="M8.3 9.5V8.3Q10.2 6.2 12.2 8.3V9.5"/></svg><svg style="left:741px;top:63px;" width="16" height="16" viewBox="0 0 16 16"><rect fill="#ececec" x="0" y="0" width="10" height="9.5"/><rect fill="#363636" x="4" y="4" width="12" height="12.5"/><rect fill="#ececec" x="5" y="5" width="10.5" height="11"/><rect fill="#363636" x="7" y="9.5" width="6.5" height="5"/><path fill="none" stroke="#363636" stroke-width="1.4" d="M8.3 9.5V8.3Q10.2 6.2 12.2 8.3"/></svg><svg style="left:788px;top:63px;" width="16" height="16" viewBox="0 0 16 16"><path fill="#ececec" d="M0 0h2.5v2.5H0zM13 0h2.5v2.5H13zM0 13h2.5v2.5H0zM13 13h2.5v2.5H13z"/><polygon fill="#ececec" points="12,6 12,12 6,12"/><circle cx="5.5" cy="6" r="3.6" fill="#ececec" stroke="#363636" stroke-width="1"/></svg><svg style="left:829px;top:63px;" width="16" height="16" viewBox="0 0 16 16"><path fill="#ececec" d="M0 1h2v2H0zM9 0h2v2H9zM13 2h2v2h-2zM0 9h2v2H0zM5 13h2v2H5zM13 12h2v2h-2z"/><polygon fill="#ececec" points="12.5,5 12.5,11 6.5,11"/><circle cx="5" cy="5.5" r="3.6" fill="#ececec" stroke="#363636" stroke-width="1"/></svg><svg style="left:876px;top:63px;" width="16" height="16" viewBox="0 0 16 16"><path fill="none" stroke="#ececec" stroke-width="1" d="M.5 12V.5H11"/><path fill="#ececec" d="M14.3 0.5L16 1.7 9 11.3 7.2 10.1Z"/><path fill="#ececec" d="M5.2 10.5Q7.5 10 8.2 12 7.8 15.5 1 16 3.8 14 5.2 10.5Z"/></svg><svg style="left:918px;top:64px;" width="16" height="16" viewBox="0 0 16 16"><path fill="#ececec" d="M.5 0H13V4H12.2Q11.8 1.5 9.5 1.5H8V12.5Q8 13.5 9.5 13.5V14.5H3.5V13.5Q5 13.5 5 12.5V1.5H3.5Q1.2 1.5.8 4H0Z"/></svg><svg style="left:958px;top:65px;" width="16" height="16" viewBox="0 0 16 16"><polygon fill="#ececec" points="3,0 12,0 9.5,3 0,3"/><polygon fill="#ececec" points="5,5 14,5 11.5,8 2,8"/><polygon fill="#ececec" points="6,10 16,10 13.5,13 3.5,13"/></svg><svg style="left:999px;top:63px;" width="16" height="16" viewBox="0 0 16 16"><rect x=".5" y=".5" width="15" height="15" fill="none" stroke="#ececec" stroke-width="1"/><rect fill="#ececec" x="2" y="2" width="12" height="2"/><path fill="none" stroke="#ececec" stroke-width="1" d="M6 7L3 9.5 6 12M10 7L13 9.5 10 12"/></svg><svg style="left:1040px;top:63px;" width="16" height="16" viewBox="0 0 16 16"><rect x=".5" y=".5" width="15" height="15" fill="none" stroke="#ececec" stroke-width="1"/><rect fill="#ececec" x="2" y="2" width="12" height="2"/><path fill="none" stroke="#ececec" stroke-width="1" d="M6 5.5Q4.5 5.5 4.5 7V9L3.5 9.8 4.5 10.6V12.5Q4.5 14 6 14M10 5.5Q11.5 5.5 11.5 7V9L12.5 9.8 11.5 10.6V12.5Q11.5 14 10 14"/></svg><svg style="left:1082px;top:64px;" width="16" height="16" viewBox="0 0 16 16"><rect fill="#ececec" x="0" y="0" width="1" height="13.5"/><rect fill="#ececec" x="3" y=".5" width="7" height="3"/><rect fill="#ececec" x="3" y="5.5" width="10" height="3"/><rect fill="#ececec" x="3" y="10.5" width="6" height="3"/></svg><svg style="left:1130px;top:64px;" width="16" height="16" viewBox="0 0 16 16"><path fill="none" stroke="#ececec" stroke-width="2" d="M1 14V1H7.6L11 4.4V10"/><path fill="#ececec" d="M0 13H6V15H0Z"/><path fill="#ececec" d="M7.2 1.5V5H10.5Z"/><circle cx="7.2" cy="9.6" r="2.7" fill="#ececec"/><circle cx="6" cy="8.4" r="1.3" fill="#363636"/><path stroke="#ececec" stroke-width="2.3" stroke-linecap="round" d="M8 10.5L11 14"/></svg><svg style="left:1169px;top:63px;" width="16" height="16" viewBox="0 0 16 16"><path stroke="#ececec" stroke-width="2.2" d="M3 3L13 13"/><circle cx="3" cy="3" r="2.9" fill="#ececec"/><circle cx="13" cy="13" r="2.9" fill="#ececec"/><circle cx="1.2" cy="1.2" r="1.7" fill="#363636"/><circle cx="14.8" cy="14.8" r="1.7" fill="#363636"/><path stroke="#363636" stroke-width="2.6" d="M9 7L7 9"/><path stroke="#ececec" stroke-width="1" d="M6 10L13.4 2.6"/><path stroke="#ececec" stroke-width="3.2" stroke-linecap="round" d="M1.8 14.2L5.8 10.2"/><circle cx="14" cy="2" r="1.7" fill="#ececec"/></svg><svg style="left:14px;top:105px;" width="16" height="16" viewBox="0 0 16 16"><path fill="#ececec" d="M0 0h1v1h-1zM0 14h1v1h-1zM0 0h1v1h-1zM14 0h1v1h-1zM2 0h1v1h-1zM2 14h1v1h-1zM0 2h1v1h-1zM14 2h1v1h-1zM4 0h1v1h-1zM4 14h1v1h-1zM0 4h1v1h-1zM14 4h1v1h-1zM6 0h1v1h-1zM6 14h1v1h-1zM0 6h1v1h-1zM14 6h1v1h-1zM8 0h1v1h-1zM8 14h1v1h-1zM0 8h1v1h-1zM14 8h1v1h-1zM10 0h1v1h-1zM10 14h1v1h-1zM0 10h1v1h-1zM14 10h1v1h-1zM12 0h1v1h-1zM12 14h1v1h-1zM0 12h1v1h-1zM14 12h1v1h-1zM14 0h1v1h-1zM14 14h1v1h-1zM0 14h1v1h-1zM14 14h1v1h-1z"/><rect fill="#ececec" x="2" y="8" width="8" height="5"/><circle cx="9.5" cy="5.7" r="3.9" fill="#363636"/><circle cx="9.5" cy="5.7" r="3.3" fill="#ececec"/></svg><svg style="left:55px;top:105px;" width="16" height="16" viewBox="0 0 16 16"><path fill="#ececec" d="M0 0h1v1h-1zM0 14h1v1h-1zM0 0h1v1h-1zM14 0h1v1h-1zM2 0h1v1h-1zM2 14h1v1h-1zM0 2h1v1h-1zM14 2h1v1h-1zM4 0h1v1h-1zM4 14h1v1h-1zM0 4h1v1h-1zM14 4h1v1h-1zM6 0h1v1h-1zM6 14h1v1h-1zM0 6h1v1h-1zM14 6h1v1h-1zM8 0h1v1h-1zM8 14h1v1h-1zM0 8h1v1h-1zM14 8h1v1h-1zM10 0h1v1h-1zM10 14h1v1h-1zM0 10h1v1h-1zM14 10h1v1h-1zM12 0h1v1h-1zM12 14h1v1h-1zM0 12h1v1h-1zM14 12h1v1h-1zM14 0h1v1h-1zM14 14h1v1h-1zM0 14h1v1h-1zM14 14h1v1h-1z"/><polygon fill="#ececec" points="5,2.5 12,2.5 9.5,5 2.5,5"/><polygon fill="#ececec" points="5,6.5 12,6.5 9.5,9 2.5,9"/><polygon fill="#ececec" points="5,10.5 12,10.5 9.5,13 2.5,13"/></svg><svg style="left:96px;top:105px;" width="16" height="16" viewBox="0 0 16 16"><path fill="#8a8a8a" d="M0 0h1v1h-1zM0 14h1v1h-1zM0 0h1v1h-1zM14 0h1v1h-1zM2 0h1v1h-1zM2 14h1v1h-1zM0 2h1v1h-1zM14 2h1v1h-1zM4 0h1v1h-1zM4 14h1v1h-1zM0 4h1v1h-1zM14 4h1v1h-1zM6 0h1v1h-1zM6 14h1v1h-1zM0 6h1v1h-1zM14 6h1v1h-1zM8 0h1v1h-1zM8 14h1v1h-1zM0 8h1v1h-1zM14 8h1v1h-1zM10 0h1v1h-1zM10 14h1v1h-1zM0 10h1v1h-1zM14 10h1v1h-1zM12 0h1v1h-1zM12 14h1v1h-1zM0 12h1v1h-1zM14 12h1v1h-1zM14 0h1v1h-1zM14 14h1v1h-1zM0 14h1v1h-1zM14 14h1v1h-1z"/><rect fill="#7a7a7a" x="2" y="8" width="8" height="5"/><circle cx="9.5" cy="5.7" r="3.9" fill="#363636"/><circle cx="9.5" cy="5.7" r="3.3" fill="#7a7a7a"/></svg><svg style="left:138px;top:105px;" width="16" height="16" viewBox="0 0 16 16"><rect x="1" y="3.5" width="10.5" height="11" fill="none" stroke="#ececec" stroke-width="1.2" stroke-dasharray="2 1.2"/><rect fill="#363636" x="9" y="0" width="6" height="6"/><rect fill="#ececec" x="10.5" y="0" width="4.5" height="4.5"/></svg><svg style="left:184px;top:105px;" width="16" height="16" viewBox="0 0 16 16"><rect fill="#ececec" x="8" y=".5" width="5.2" height="9.5"/><rect fill="#ececec" x="0" y="10.5" width="8" height="5"/><path fill="none" stroke="#ececec" stroke-width="1.6" d="M7 2.2Q3.5 2.5 3 7"/><polygon fill="#ececec" points="0.5,6 5.5,6 3,9.5"/></svg><svg style="left:225px;top:105px;" width="16" height="16" viewBox="0 0 16 16"><rect fill="#ececec" x="0" y=".5" width="5.2" height="9.5"/><rect fill="#ececec" x="6" y="10.5" width="8" height="5"/><path fill="none" stroke="#ececec" stroke-width="1.6" d="M6.2 2.2Q10 2.5 10.8 7"/><polygon fill="#ececec" points="8.3,6 13.3,6 10.8,9.5"/></svg><svg style="left:267px;top:105px;" width="16" height="16" viewBox="0 0 16 16"><polygon fill="#ececec" points="6.5,1 6.5,13 0,13"/><polygon fill="#ececec" points="8.5,1 8.5,13 15,13"/><path stroke="#ececec" stroke-width="1" stroke-dasharray="1 1" d="M7.5 0V16"/></svg><svg style="left:308px;top:106px;" width="16" height="16" viewBox="0 0 16 16"><polygon fill="#ececec" points="1,0 13,6.2 1,6.2"/><polygon fill="#ececec" points="1,8.8 13,8.8 1,15"/><path stroke="#ececec" stroke-width="1" stroke-dasharray="1 1" d="M0 7.5H15"/></svg><svg style="left:355px;top:106px;" width="16" height="16" viewBox="0 0 16 16"><rect fill="#ececec" x="0" y="0" width="13" height="2"/><rect fill="#ececec" x="0" y="4" width="4" height="2"/><rect fill="#ececec" x="0" y="8" width="4" height="2"/><rect fill="#ececec" x="0" y="12" width="4" height="2"/><rect fill="#ececec" x="8" y="6" width="2" height="8"/><polygon fill="#ececec" points="5.5,7 9,3 12.5,7"/></svg><svg style="left:396px;top:106px;" width="16" height="16" viewBox="0 0 16 16"><rect fill="#ececec" x="0" y="0" width="4" height="2"/><rect fill="#ececec" x="0" y="4" width="13" height="2"/><rect fill="#ececec" x="0" y="8" width="4" height="2"/><rect fill="#ececec" x="0" y="12" width="4" height="2"/><rect fill="#ececec" x="8" y="10" width="2" height="4"/><polygon fill="#ececec" points="5.5,11 9,7.2 12.5,11"/></svg><svg style="left:437px;top:106px;" width="16" height="16" viewBox="0 0 16 16"><rect fill="#ececec" x="0" y="0" width="4" height="2"/><rect fill="#ececec" x="0" y="4" width="4" height="2"/><rect fill="#ececec" x="0" y="8" width="13" height="2"/><rect fill="#ececec" x="0" y="12" width="4" height="2"/><rect fill="#ececec" x="8" y="0" width="2" height="4"/><polygon fill="#ececec" points="5.5,3 9,6.8 12.5,3"/></svg><svg style="left:478px;top:106px;" width="16" height="16" viewBox="0 0 16 16"><rect fill="#ececec" x="0" y="0" width="4" height="2"/><rect fill="#ececec" x="0" y="4" width="4" height="2"/><rect fill="#ececec" x="0" y="8" width="4" height="2"/><rect fill="#ececec" x="0" y="12" width="13" height="2"/><rect fill="#ececec" x="8" y="0" width="2" height="7"/><polygon fill="#ececec" points="5.5,6 9,10 12.5,6"/></svg><svg style="left:953px;top:107px;" width="16" height="16" viewBox="0 0 16 16"><rect fill="#ececec" x="0" y="6.5" width="9.5" height="8"/><path fill="none" stroke="#ececec" stroke-width="1.8" d="M7.2 6.5V4Q7.2 1 10 1T12.8 4V6"/></svg><svg style="left:1212px;top:106px;" width="16" height="16" viewBox="0 0 16 16"><path fill="none" stroke="#fff" stroke-width="1.4" d="M0 1H10.5V6.5M0 4H8V6.5"/><path fill="#fff" d="M0 9.5h2v2H0zM3 9.5h2v2H3zM6 9.5h2.5v2H6z"/><polygon fill="#fff" points="8,7.8 11.5,10.5 8,13.2"/></svg><svg style="left:1253.5px;top:106px;" width="16" height="16" viewBox="0 0 16 16"><path fill="none" stroke="#fff" stroke-width="1.4" d="M0 1H7Q10.5 1 10.5 4.5V6.5M0 4H6Q8 4 8 6V6.5"/><path fill="#fff" d="M0 9.5h2v2H0zM3 9.5h2v2H3zM6 9.5h2.5v2H6z"/><polygon fill="#fff" points="8,7.8 11.5,10.5 8,13.2"/></svg><svg style="left:1294.5px;top:106px;" width="16" height="16" viewBox="0 0 16 16"><path fill="none" stroke="#fff" stroke-width="1.2" d="M0 .6H10.5V7M0 6H8V7"/><rect x="0" y="1.8" width="8" height="3" fill="#b9c7da"/><path fill="#fff" d="M0 9.5h2v2H0zM3 9.5h2v2H3zM6 9.5h2.5v2H6z"/><polygon fill="#fff" points="8,7.8 11.5,10.5 8,13.2"/></svg><svg style="left:1335.5px;top:106px;" width="16" height="16" viewBox="0 0 16 16"><path fill="none" stroke="#fff" stroke-width="1.2" d="M0 .6H10.5V7M0 6H8V7M0 2L1.5 3.5 0 5M3 2L4.5 3.5 3 5M6 2L7.5 3.5 6 5"/><path fill="#fff" d="M0 9.5h2v2H0zM3 9.5h2v2H3zM6 9.5h2.5v2H6z"/><polygon fill="#fff" points="8,7.8 11.5,10.5 8,13.2"/></svg><svg style="left:9px;top:143px;" width="10" height="15" viewBox="0 0 10 15"><path fill="#e8e8e8" d="M0 0L9.5 9H5.8L8.2 14 6.2 15 3.8 10 0 13.5Z"/></svg><svg style="left:5px;top:175px;" width="16" height="16" viewBox="0 0 16 16"><path fill="none" stroke="#e4e4e4" stroke-width="1" d="M1.2 14Q1.5 7 5 3.8Q8.5 1 14.3 1.3"/><circle cx="1.3" cy="14" r="1.3" fill="#e4e4e4"/><circle cx="14.3" cy="1.3" r="1.3" fill="#e4e4e4"/><circle cx="5" cy="3.8" r="1.3" fill="#e4e4e4"/><polygon fill="#e4e4e4" points="6.5,5.2 14.8,11.2 10.5,14.5"/></svg><svg style="left:6px;top:207px;" width="15" height="15" viewBox="0 0 15 15"><circle cx="5" cy="5" r="4.4" fill="none" stroke="#e4e4e4" stroke-width="1.1"/><rect x="5.5" y="5.5" width="8.5" height="8.5" fill="#333" stroke="#e4e4e4" stroke-width="1.1"/><path fill="#555" d="M6 6H9.3Q9 9 6 9.3Z"/></svg><svg style="left:6px;top:242px;" width="14" height="14" viewBox="0 0 14 14"><rect x=".9" y=".9" width="12.3" height="12" fill="none" stroke="#cfcfcf" stroke-width="1.7"/></svg><svg style="left:6px;top:274px;" width="14" height="15" viewBox="0 0 14 15"><ellipse cx="7" cy="7.2" rx="6.4" ry="6.4" fill="none" stroke="#e2e2e2" stroke-width="1.2"/></svg><svg style="left:5px;top:305px;" width="16" height="16" viewBox="0 0 16 16"><polygon fill="none" stroke="#e4e4e4" stroke-width="1" points="10.61,3.20 11.66,7.42 15.84,8.61 12.15,10.91 12.31,15.25 8.98,12.45 4.90,13.95 6.53,9.92 3.85,6.50 8.18,6.80"/><path fill="none" stroke="#e4e4e4" stroke-width="1" d="M4 .8L.6 4.5 3 10.5M4 .8L8.5 3"/></svg><svg style="left:7px;top:335px;" width="13" height="16" viewBox="0 0 13 16"><polygon fill="#ececec" stroke="#363636" stroke-width=".6" points="0,5 6.5,2.9 6.5,10.4 0,12.5"/><polygon fill="#8e8e8e" stroke="#363636" stroke-width=".6" points="6.5,2.9 12.8,7 12.8,13 6.5,10.4"/><polygon fill="#b4b4b4" stroke="#363636" stroke-width=".6" points="0,12.5 6.5,10.4 12.8,13 5.5,17.3"/></svg><svg style="left:5px;top:370px;" width="16" height="16" viewBox="0 0 16 16"><path fill="none" stroke="#e4e4e4" stroke-width="1.5" stroke-linecap="round" d="M7.60 6.74 L7.79 6.65 L8.02 6.63 L8.27 6.67 L8.52 6.80 L8.75 7.02 L8.92 7.30 L9.01 7.65 L9.00 8.04 L8.89 8.43 L8.66 8.81 L8.32 9.13 L7.89 9.36 L7.38 9.48 L6.83 9.46 L6.29 9.30 L5.77 8.99 L5.34 8.54 L5.02 7.96 L4.85 7.30 L4.86 6.60 L5.04 5.89 L5.42 5.22 L5.97 4.66 L6.67 4.23 L7.48 3.99 L8.35 3.96 L9.22 4.15 L10.05 4.57 L10.76 5.20 L11.31 6.02 L11.65 6.97 L11.74 8.00 L11.56 9.04 L11.12 10.04 L10.43 10.91 L9.52 11.60 L8.44 12.06 L7.25 12.23 L6.03 12.10 L4.86 11.65 L3.81 10.92 L2.96 9.92 L2.38 8.73 L2.10 7.39 L2.17 6.00 L2.58 4.65 L3.34 3.42 L4.40 2.40 L5.70 1.66 L7.17 1.25 L8.73 1.23 L10.26 1.60 L11.68 2.36 L12.89 3.46 L13.81 4.85 L14.35 6.45 L14.49 8.16 L14.19 9.88 L13.46 11.50 L12.34 12.90"/></svg><svg style="left:5px;top:404px;" width="16" height="16" viewBox="0 0 16 16"><path fill="none" stroke="#e4e4e4" stroke-width="1.1" d="M1.5 1.5H6.5M1.5 1.5Q4 7 1.5 13Q5 14 8 10"/><circle cx="1.5" cy="1.5" r="1.3" fill="#e4e4e4"/><circle cx="1.5" cy="13.2" r="1.3" fill="#e4e4e4"/><path fill="#e4e4e4" d="M11 .5Q16 1 15 5.5L10.5 12.5 7.3 10.5Q8.5 5.5 11 .5Z"/><rect x="7" y="11.2" width="3" height="2.5" transform="rotate(32 8.5 12.5)" fill="#e4e4e4"/></svg><svg style="left:5px;top:437px;" width="16" height="16" viewBox="0 0 16 16"><path fill="#e4e4e4" d="M12.5 0.8L15.2 3.5 5.5 13.2 1 15 2.8 10.5Z"/><path fill="#333" d="M11.5 2.5L13.5 4.5 12.8 5.2 10.8 3.2Z"/><path fill="none" stroke="#e4e4e4" stroke-width="1" d="M4 1.5Q1.5 1.5 2.5 3.5Q4 5 1.5 6Q.5 7.5 2.5 8"/></svg><svg style="left:5px;top:468px;" width="16" height="14" viewBox="0 0 16 14"><path fill="none" stroke="#e4e4e4" stroke-width="1.5" d="M3.5 0Q.5 3.5 2 8Q3 11 1.5 13"/><path fill="#e4e4e4" d="M10.5 0.5L15.5 4.5 12 9Q9 12.5 5.5 13L5 12.2 8 9.2 7.3 8.5 4.5 11.6 3.8 11Q4.2 7 8 3.8Z"/><circle cx="9.8" cy="6.3" r="1" fill="#333"/></svg><svg style="left:10px;top:500px;" width="13" height="15" viewBox="0 0 13 15"><path fill="#f0f0f0" d="M2.6 0H5L8 15H6.2L5.5 11.2H2.1L1.4 15H-.4ZM2.4 9.5H5.2L3.8 2.4Z"/><rect fill="#c8c8c8" x="8.8" y="0" width="1.7" height="15"/></svg><svg style="left:5px;top:535px;" width="16" height="16" viewBox="0 0 16 16"><defs><linearGradient id="gg" x1="0" y1="0" x2="1" y2="1"><stop offset="0" stop-color="#fff"/><stop offset="1" stop-color="#777"/></linearGradient></defs><rect x=".5" y=".5" width="15" height="15" rx="1.5" fill="#8a8a8a" stroke="#9a9a9a"/><polygon points="1.5,2 14,14.5 1.5,14.5" fill="#e9e9e9"/><path stroke="#222" stroke-width="1" d="M2.5 2.5L13 13"/><circle cx="2.8" cy="2.8" r="1.4" fill="#222"/><circle cx="12.8" cy="12.8" r="1.4" fill="#222"/></svg><svg style="left:5px;top:567px;" width="16" height="16" viewBox="0 0 16 16"><polygon points="2,3 13,1.5 14,13 2.5,14" fill="#777"/><path fill="none" stroke="#999" stroke-width=".6" d="M4 3L6 14M8 2.5L9 14M11 2L12 13.5M2 6H13.5M2 9.5H14M2.2 12H14"/><path fill="#e4e4e4" d="M0 .5h3.5V4H0zM11.5 0h3.5v3.5h-3.5zM12.5 11.5H16V15h-3.5zM.5 12h3.5v3.5H.5z"/></svg><svg style="left:7px;top:599px;" width="14" height="16" viewBox="0 0 14 16"><ellipse cx="9.7" cy="2.6" rx="2.1" ry="3.2" transform="rotate(45 9.7 2.6)" fill="#e4e4e4"/><path stroke="#e4e4e4" stroke-width="1.2" d="M6.6 4L10.2 7.6"/><path stroke="#e4e4e4" stroke-width="1.3" d="M8.5 5.8L2.6 12.4"/><circle cx="1.9" cy="14.3" r="1.4" fill="#e4e4e4"/></svg><svg style="left:5px;top:631px;" width="16" height="16" viewBox="0 0 16 16"><path fill="#e4e4e4" d="M1 14.5V8Q1 5 3.5 5H6V7.8H4.2V14.5Z"/><polygon fill="#e4e4e4" points="5,5 15.2,10.2 10,15.6 4.6,11"/><rect x="8.4" y="-.3" width="2.8" height="9" fill="#363636"/><rect x="9" y="0" width="1.9" height="8" fill="#e4e4e4"/></svg><svg style="left:5px;top:668px;" width="16" height="15" viewBox="0 0 16 15"><path fill="#e4e4e4" d="M0 15V9.5Q2.8 9.5 4.5 7.8Q7 4.5 9 3Q11.5 1 14 2Q15.5 2.8 15.5 5Q15.5 8 12.5 8.5Q10.5 8.5 10.5 6.7Q10.5 5 12.2 4.8Q10 4.8 8.5 7.5Q7.3 9.5 10 9.5H16V15Z"/></svg><svg style="left:6px;top:698px;" width="16" height="15" viewBox="0 0 16 15"><path fill="#e4e4e4" d="M9 6.5H13V4.5H9.5ZM8.5 7.5Q7.5 8.5 7.5 10V15H15V10Q15 8 13.5 7.5Z"/><circle cx="1" cy="1" r=".7" fill="#e4e4e4"/><circle cx="3" cy="2" r=".7" fill="#e4e4e4"/><circle cx="5" cy="1" r=".7" fill="#e4e4e4"/><circle cx="1" cy="4" r=".7" fill="#e4e4e4"/><circle cx="3.5" cy="4.5" r=".7" fill="#e4e4e4"/><circle cx="5.5" cy="3.5" r=".7" fill="#e4e4e4"/><circle cx="2" cy="6.5" r=".7" fill="#e4e4e4"/><circle cx="4.5" cy="6.5" r=".7" fill="#e4e4e4"/><circle cx="7" cy="5" r=".7" fill="#e4e4e4"/></svg><svg style="left:6px;top:731px;" width="15" height="15" viewBox="0 0 15 15"><path fill="#e4e4e4" d="M9.5 0L14 4 8 10 3.5 6Z"/><path fill="#e4e4e4" d="M3 6.5L7.5 10.5 6 12H3.5L1 9.5Z" opacity=".75"/><rect x="0" y="13.5" width="5" height="1.2" fill="#e4e4e4"/><rect x="7" y="13.5" width="7" height="1.2" fill="#e4e4e4"/></svg><svg style="left:5px;top:762px;" width="16" height="16" viewBox="0 0 16 16"><rect x="5" y="0" width="5" height="4.5" fill="#e4e4e4"/><rect x="0" y="11" width="5" height="5" fill="#e4e4e4"/><rect x="11" y="11" width="5" height="5" fill="#e4e4e4"/><path fill="none" stroke="#e4e4e4" stroke-width="1" d="M6.5 4.5L2.5 11M10 2H12Q13.5 2 13.5 4V11"/></svg><svg style="left:6px;top:794px;" width="15" height="16" viewBox="0 0 15 16"><circle cx="7" cy="2.3" r="1.8" fill="none" stroke="#e4e4e4" stroke-width="1.4"/><path fill="none" stroke="#e4e4e4" stroke-width="1.6" d="M6 4L1.5 15.5M8 4L12.5 15.5"/><path fill="none" stroke="#e4e4e4" stroke-width="1.2" d="M0 10Q7 7.5 14 10"/></svg><svg style="left:8px;top:830px;" width="10" height="15" viewBox="0 0 10 15"><rect x=".7" y=".7" width="8.6" height="13.6" fill="none" stroke="#e4e4e4" stroke-width="1.4"/><path fill="#aaa" d="M5 2.5H8V13H5L6 11 5 9 6.5 7 5.5 5Z"/></svg><svg style="left:6px;top:862px;" width="15" height="15" viewBox="0 0 15 15"><circle cx="6.5" cy="6.5" r="5.6" fill="none" stroke="#e4e4e4" stroke-width="1.7"/><path stroke="#e4e4e4" stroke-width="2.4" stroke-linecap="round" d="M11 11L14 14"/></svg><svg style="left:7px;top:895px;" width="13" height="17" viewBox="0 0 13 17"><path fill="none" stroke="#e4e4e4" stroke-width="1.3" d="M3.5 3V.7H9.5L11.3 2.5V13H9"/><path fill="none" stroke="#e4e4e4" stroke-width="1.4" d="M.7 4H6.5L8.5 6V16H.7Z"/></svg><div style="left:5px;top:477px;width:5px;height:40px;background:#58d0f4;border-radius:2.5px"></div><svg style="left:10px;top:6px;" width="12" height="11" viewBox="0 0 12 11"><rect x="0" y="0" width="12" height="11" fill="#c9ccd2"/><rect x="0" y="0" width="12" height="2" fill="#4a79c2"/><rect x="0" y="2" width="12" height="9" fill="url(#wg)"/><defs><linearGradient id="wg" x1="0" y1="0" x2="0" y2="1"><stop offset="0" stop-color="#eef0f3"/><stop offset="1" stop-color="#aeb3bb"/></linearGradient></defs></svg><svg style="left:1880.5px;top:8.5px;" width="8" height="8" viewBox="0 0 8 8"><rect x="1" y="1" width="5.5" height="5.5" fill="#222" stroke="#9d9de0" stroke-width="1.4"/><rect x=".2" y=".2" width="7.1" height="7.1" fill="none" stroke="#232366" stroke-width=".5"/></svg><svg style="left:1901.5px;top:8.5px;" width="7" height="7" viewBox="0 0 7 7"><path stroke="#111" stroke-width="2.6" d="M.5 .5L6.5 6.5M6.5 .5L.5 6.5"/><path stroke="#fff" stroke-width="1.3" d="M.5 .5L6.5 6.5M6.5 .5L.5 6.5"/></svg><svg style="left:1846px;top:63px;" width="16" height="16" viewBox="0 0 16 16"><circle cx="3.4" cy="1.6" r="1.6" fill="#ececec"/><circle cx="3.4" cy="14.3" r="1.6" fill="#ececec"/><path fill="none" stroke="#ececec" stroke-width="2.8" d="M6 1.5H8Q14.6 1.5 14.6 8Q14.6 14.4 8 14.4H6"/><path fill="none" stroke="#ececec" stroke-width="1.6" d="M3.8 5.8Q.8 5.6 1.6 7.6Q3.6 8.6 .8 10.5"/></svg><div style="left:1878px;top:54px;width:35.5px;height:34px;border:1px solid #141414;border-radius:5px;background:#333"></div><svg style="left:1888px;top:62px" width="16" height="17" viewBox="0 0 16 17"><rect x="0" y="0" width="16" height="17" fill="#000"/><rect x="1.2" y="1.2" width="13.6" height="9.34" fill="#3a3a3a"/><path stroke="#000" stroke-width="2" d="M5.40 3.67L10.60 8.07M10.60 3.67L5.40 8.07"/></svg><svg style="left:1494px;top:139px;" width="14" height="13" viewBox="0 0 14 13"><rect x=".6" y=".6" width="13" height="9" rx="1" fill="none" stroke="#ececec" stroke-width="1.2"/><rect x="5.5" y="10" width="3" height="1.5" fill="#ececec"/><rect x="3.5" y="11.3" width="7" height="1.2" fill="#ececec"/></svg><svg style="left:34px;top:139px;" width="14" height="14" viewBox="0 0 14 14"><rect fill="#ececec" x="0" y="6" width="10" height="8"/><path fill="none" stroke="#ececec" stroke-width="1.9" d="M8.3 6V3.8Q8.3 1 11 1T13.7 3.8V6.2"/></svg><svg style="left:52px;top:152px" width="5" height="5"><polygon points="0,0 4,0 0,4" fill="#9d9d9d"/><polygon points="4,0 4,4 0,4" fill="#444"/></svg><svg style="left:47px;top:157px" width="5" height="6"><polygon points="0,0 4,0 0,5" fill="#9d9d9d"/><polygon points="4,0 4,5 0,5" fill="#444"/></svg><svg style="left:340px;top:965px;" width="16" height="15" viewBox="0 0 16 15"><path fill="none" stroke="#ececec" stroke-width="1.8" d="M1 9Q8 1.5 15 9Q8 16.5 1 9Z"/><circle cx="8" cy="8.8" r="3" fill="#ececec"/><path stroke="#ececec" stroke-width="1.3" d="M2.2 5.6L1 4.2M4.2 4L3.4 2.3M6.5 3.2L6.2 1.2M9.2 3.1L9.6 1.2M11.6 3.8L12.6 2.1M13.8 5.4L15.2 4"/></svg><svg style="left:378px;top:967px;" width="14" height="14" viewBox="0 0 14 14"><rect fill="#ececec" x="0" y="6" width="10" height="8"/><path fill="none" stroke="#ececec" stroke-width="1.9" d="M8.3 6V3.8Q8.3 1 11 1T13.7 3.8V6.2"/></svg><svg style="left:1501px;top:965px" width="16" height="16" viewBox="0 0 16 16"><rect x="0" y="0" width="16" height="16" fill="#2b2b2b"/><rect x="1.2" y="1.2" width="13.6" height="8.72" fill="#393939"/><path stroke="#2b2b2b" stroke-width="2" d="M5.40 3.36L10.60 7.76M10.60 3.36L5.40 7.76"/></svg><svg style="left:1573px;top:965px" width="16" height="16" viewBox="0 0 16 16"><rect x="0" y="0" width="16" height="16" fill="#2b2b2b"/><rect x="1.2" y="1.2" width="13.6" height="8.72" fill="#393939"/><path stroke="#2b2b2b" stroke-width="2" d="M5.40 3.36L10.60 7.76M10.60 3.36L5.40 7.76"/></svg><svg style="left:1512px;top:519px" width="12" height="12" viewBox="0 0 12 12"><rect x="0" y="0" width="12" height="12" fill="#000"/><rect x="1.2" y="1.2" width="9.6" height="6.24" fill="#3a3a3a"/><path stroke="#000" stroke-width="2" d="M3.40 2.12L8.60 6.52M8.60 2.12L3.40 6.52"/></svg><div style="left:1499.5px;top:904px;width:3px;height:3px;background:#eee;border-radius:50%"></div><div style="left:0px;top:992px;width:1920px;height:1px;background:#0a0a0a"></div><svg style="left:1858px;top:932px;" width="12" height="7" viewBox="0 0 12 7"><path fill="none" stroke="#676767" stroke-width="1.7" stroke-linecap="round" d="M1 6L6 1 11 6"/></svg><svg style="left:1881px;top:931px;" width="12" height="7" viewBox="0 0 12 7"><path fill="none" stroke="#ececec" stroke-width="1.7" stroke-linecap="round" d="M1 1L6 6 11 1"/></svg><svg style="left:1901px;top:931px" width="16" height="16" viewBox="0 0 16 16"><rect x="0" y="0" width="16" height="16" fill="#000"/><rect x="1.2" y="1.2" width="13.6" height="8.72" fill="#404040"/><path stroke="#000" stroke-width="2" d="M5.40 3.36L10.60 7.76M10.60 3.36L5.40 7.76"/></svg><svg style="left:1545px;top:151px;" width="16" height="13" viewBox="0 0 16 13"><polygon fill="#ececec" points="3.5,0 12,0 9.5,3 1,3"/><polygon fill="#ececec" points="3.5,5 14,5 11.5,8 1,8"/><polygon fill="#ececec" points="5,10 16,10 13.5,13 2.5,13"/></svg><svg style="left:1608.5px;top:149px;" width="16" height="16" viewBox="0 0 16 16"><path fill="none" stroke="#ececec" stroke-width="1" d="M.5 12V.5H11"/><path fill="#ececec" d="M14.3 0.5L16 1.7 9 11.3 7.2 10.1Z"/><path fill="#ececec" d="M5.2 10.5Q7.5 10 8.2 12 7.8 15.5 1 16 3.8 14 5.2 10.5Z"/></svg><svg style="left:1718px;top:148px" width="16" height="17" viewBox="0 0 16 17"><rect x="0" y="0" width="16" height="17" fill="#1a1a1a"/><rect x="1.2" y="1.2" width="13.6" height="9.34" fill="#2b2b2b"/><path stroke="#1a1a1a" stroke-width="2" d="M5.40 3.67L10.60 8.07M10.60 3.67L5.40 8.07"/></svg><svg style="left:1893px;top:153px;" width="12" height="7" viewBox="0 0 12 7"><path fill="none" stroke="#b5b5b5" stroke-width="1.5" d="M.8 .8L6 6 11.2 .8"/></svg><svg style="left:1541px;top:184.5px;" width="13" height="13" viewBox="0 0 13 13"><rect x="0" y="0" width="13" height="13" rx="1" fill="#ececec"/></svg><svg style="left:1599px;top:184.5px;" width="13" height="13" viewBox="0 0 13 13"><rect x=".75" y=".75" width="11.5" height="11.5" rx="1" fill="none" stroke="#d4d4d4" stroke-width="1.5"/></svg><svg style="left:1715px;top:184px;" width="13" height="14" viewBox="0 0 13 14"><path fill="#ececec" d="M0 4.5H9V6H0ZM0 11.5H13V13H0Z"/><polygon fill="#ececec" points="9,1.5 13,5.2 9,9"/><path fill="#ececec" d="M1 8H3V9.2H1ZM5 8H7V9.2H5Z"/></svg><svg style="left:1540px;top:219px;" width="9" height="9" viewBox="0 0 9 9"><path stroke="#6f6f6f" stroke-width="1.5" d="M.5 .5L8 8M8 .5L.5 8"/></svg><svg style="left:1564px;top:215px;" width="16" height="16" viewBox="0 0 16 16"><rect x="0" y="0" width="16" height="16" fill="#5d5d5d"/></svg><svg style="left:1592px;top:215px;" width="16" height="16" viewBox="0 0 16 16"><defs><pattern id="ck" width="2" height="2" patternUnits="userSpaceOnUse"><rect width="1" height="1" fill="#444"/><rect x="1" y="1" width="1" height="1" fill="#444"/></pattern></defs><rect x="0" y="0" width="16" height="16" fill="#3a3a3a"/><rect x="0" y="0" width="5" height="16" fill="#595959"/><rect x="5" y="0" width="6" height="16" fill="url(#ck)"/><rect x="11" y="0" width="5" height="16" fill="#474747"/></svg><svg style="left:1620px;top:215px;" width="16" height="16" viewBox="0 0 16 16"><defs><radialGradient id="rg"><stop offset="0" stop-color="#6a6a6a"/><stop offset=".4" stop-color="#3f3f3f"/><stop offset="1" stop-color="#333"/></radialGradient></defs><rect x="0" y="0" width="16" height="16" fill="url(#rg)"/></svg><svg style="left:1648px;top:215px;" width="16" height="16" viewBox="0 0 16 16"><rect x=".5" y=".5" width="15" height="15" rx="1" fill="none" stroke="#5a5a5a"/><rect x="1" y="1" width="7" height="7" fill="#4a4a4a"/><rect x="8" y="8" width="7" height="7" fill="#4a4a4a"/></svg><svg style="left:1676px;top:215px;" width="16" height="16" viewBox="0 0 16 16"><g fill="#5a5a5a"><circle cx="2" cy="2" r="1.6"/><circle cx="8" cy="2" r="1.6"/><circle cx="14" cy="2" r="1.6"/><circle cx="5" cy="5" r="1.6"/><circle cx="11" cy="5" r="1.6"/><circle cx="2" cy="8" r="1.6"/><circle cx="8" cy="8" r="1.6"/><circle cx="14" cy="8" r="1.6"/><circle cx="5" cy="11" r="1.6"/><circle cx="11" cy="11" r="1.6"/><circle cx="2" cy="14" r="1.6"/><circle cx="8" cy="14" r="1.6"/><circle cx="14" cy="14" r="1.6"/></g></svg><svg style="left:1704px;top:215px;" width="16" height="16" viewBox="0 0 16 16"><rect x=".5" y=".5" width="15" height="15" fill="none" stroke="#5a5a5a"/><rect x="1" y="1" width="14" height="4" fill="#4a4a4a"/><path fill="none" stroke="#5a5a5a" stroke-width="1.2" d="M6 6L10 12 15 6"/></svg><svg style="left:1735px;top:215px;" width="16" height="16" viewBox="0 0 16 16"><path fill="none" stroke="#5e5e5e" stroke-width="2" d="M1 4Q1 .8 5 .8Q9 .8 9 4Q9 6 6.5 7Q5 7.8 5 10"/><circle cx="5" cy="13.5" r="1.3" fill="#5e5e5e"/></svg><svg style="left:1859px;top:215px;" width="16" height="16" viewBox="0 0 16 16"><path fill="#7f97b6" d="M2 1Q5 1 6.5 4Q7 5 6.5 7.5Q5.5 10 7 11Q8 12 9 11Q10.5 10 9.5 7.5Q9 5 9.5 4Q11 1 14 1Q16 3 15 8Q13.5 15 8 15Q2.5 15 1 8Q0 3 2 1Z"/><path fill="#2a5590" d="M8 5Q10 9 10 10.5Q10 12.5 8 12.5Q6 12.5 6 10.5Q6 9 8 5Z"/></svg><svg style="left:1887px;top:215px;" width="16" height="16" viewBox="0 0 16 16"><path fill="#676767" d="M2 1Q5 1 8 4Q11 1 14 1Q16 3 15 8Q13.5 15 8 15Q2.5 15 1 8Q0 3 2 1Z"/></svg><svg style="left:0px;top:0px;" width="9" height="14" viewBox="0 0 9 14"><path fill="#fff" stroke="#000" stroke-width=".8" d="M.4 .4V11.5L3 9 5 13.2 6.8 12.4 4.9 8.3H8.4Z"/></svg></body></html>
